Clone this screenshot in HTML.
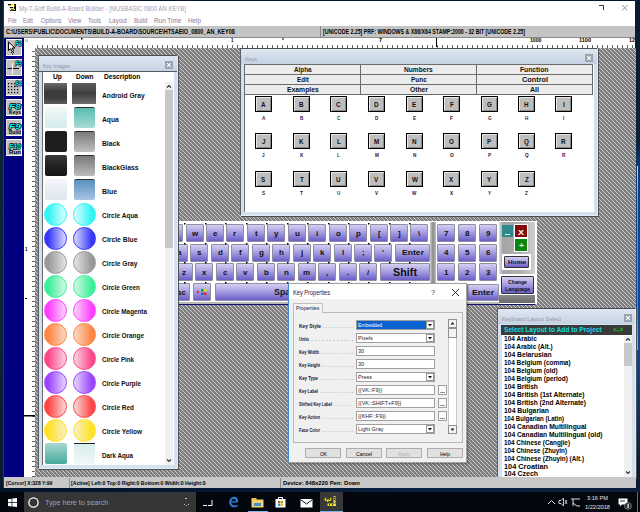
<!DOCTYPE html><html><head><meta charset="utf-8"><style>
*{margin:0;padding:0;box-sizing:border-box}
html,body{width:640px;height:512px;overflow:hidden;background:#041630;font-family:"Liberation Sans",sans-serif;position:relative}
.a{position:absolute}
.kw{position:absolute;background:#d3e0ef;border:1px solid #e4ecf6;border-top-color:#4a4f54;border-left-color:#5a5f64;box-shadow:1px 1px 0 #505050}
.ttl{position:absolute;background:linear-gradient(#dfe8f3,#c4d2e2)}
.cls{position:absolute;width:8px;height:8px;background:#9aa4ae}
.key{position:absolute;width:17px;height:16px;background:#bebebe;border:1px solid #000;box-shadow:inset 1px 1px 0 #e6e6e6, inset -1px -1px 0 #8a8a8a}
.tab{position:absolute;height:11px;background:#ececec;border:1px solid #6c6c6c}
.tbb{position:absolute;left:6px;width:16px;height:17px;background:#c0c0c0;border:1px solid #fff;border-left-color:#d8d8d8}
.img{position:absolute;width:23px;height:21px}
.cir{position:absolute;width:23px;height:23px;border-radius:50%}
.pk{position:absolute;background:linear-gradient(#d4cff2,#a9a1e2 45%,#6a5dc8);border:1px solid #8e8ea0;border-radius:1px}
</style></head><body>
<div class="a" style="left:0px;top:0px;width:4px;height:488px;background:linear-gradient(#08182c,#0c2838 30%,#0a2436 70%,#081a2c)"></div>
<div class="a" style="left:3px;top:0px;width:1px;height:488px;background:#2a3a48"></div>
<div class="a" style="left:635px;top:0px;width:5px;height:492px;background:linear-gradient(#0b1a2e,#0b2038 140px,#0a3a74 165px,#0b4a94 250px,#0b4a94 350px,#0a3466 410px,#0b1a2e 470px)"></div>
<div class="a" style="left:636.5px;top:166px;width:1.2px;height:184px;background:linear-gradient(#b0e0ff,#50a8e8 20%,#3890d8 80%,#70c0f0)"></div>
<div class="a" style="left:4px;top:1px;width:631px;height:487px;background:#fff"></div>
<svg class="a" style="left:8px;top:4px" width="9" height="8"><rect x="0" y="0" width="3.5" height="1.3" fill="#000"/><rect x="3" y="0" width="2" height="2" fill="#ff0"/><rect x="6" y="0" width="2" height="7" fill="#000"/><rect x="6" y="1.3" width="1" height="1" fill="#ff0"/><rect x="1.8" y="3" width="3.4" height="1.2" fill="#000"/><rect x="1.8" y="5.4" width="6.2" height="1.4" fill="#000"/><rect x="1.8" y="5" width="1.2" height="1" fill="#ff0"/><rect x="6" y="5" width="1" height="1" fill="#ff0"/></svg>
<svg class="a" style="left:19.00px;top:3.60px;overflow:visible" width="169.0" height="9.5"><text x="0" y="7.00" textLength="167.00" lengthAdjust="spacingAndGlyphs" font-family="Liberation Sans" font-size="7" font-weight="normal" fill="#a49cc0" fill-opacity="1">My-T-Soft Build-A-Board Builder - [MUSBASIC 0800 AN KEYB]</text></svg>
<svg class="a" style="left:598px;top:4px" width="8" height="7"><path d="M1 1.5H5.5V6" stroke="#333" fill="none" stroke-width="1"/></svg>
<svg class="a" style="left:621px;top:4px" width="8" height="8"><path d="M1 1L6.5 6.5M6.5 1L1 6.5" stroke="#888" stroke-width="0.9"/></svg>
<svg class="a" style="left:7.80px;top:15.80px;overflow:visible" width="10.6" height="9.5"><text x="0" y="7.00" textLength="8.60" lengthAdjust="spacingAndGlyphs" font-family="Liberation Sans" font-size="7" font-weight="normal" fill="#8878a0" fill-opacity="1">File</text></svg>
<svg class="a" style="left:23.40px;top:15.80px;overflow:visible" width="11.9" height="9.5"><text x="0" y="7.00" textLength="9.90" lengthAdjust="spacingAndGlyphs" font-family="Liberation Sans" font-size="7" font-weight="normal" fill="#8878a0" fill-opacity="1">Edit</text></svg>
<svg class="a" style="left:40.60px;top:15.80px;overflow:visible" width="22.4" height="9.5"><text x="0" y="7.00" textLength="20.40" lengthAdjust="spacingAndGlyphs" font-family="Liberation Sans" font-size="7" font-weight="normal" fill="#8878a0" fill-opacity="1">Options</text></svg>
<svg class="a" style="left:68.00px;top:15.80px;overflow:visible" width="15.2" height="9.5"><text x="0" y="7.00" textLength="13.20" lengthAdjust="spacingAndGlyphs" font-family="Liberation Sans" font-size="7" font-weight="normal" fill="#8878a0" fill-opacity="1">View</text></svg>
<svg class="a" style="left:88.30px;top:15.80px;overflow:visible" width="15.0" height="9.5"><text x="0" y="7.00" textLength="13.00" lengthAdjust="spacingAndGlyphs" font-family="Liberation Sans" font-size="7" font-weight="normal" fill="#8878a0" fill-opacity="1">Tools</text></svg>
<svg class="a" style="left:108.60px;top:15.80px;overflow:visible" width="20.0" height="9.5"><text x="0" y="7.00" textLength="18.00" lengthAdjust="spacingAndGlyphs" font-family="Liberation Sans" font-size="7" font-weight="normal" fill="#8878a0" fill-opacity="1">Layout</text></svg>
<svg class="a" style="left:133.60px;top:15.80px;overflow:visible" width="15.3" height="9.5"><text x="0" y="7.00" textLength="13.30" lengthAdjust="spacingAndGlyphs" font-family="Liberation Sans" font-size="7" font-weight="normal" fill="#8878a0" fill-opacity="1">Build</text></svg>
<svg class="a" style="left:153.90px;top:15.80px;overflow:visible" width="29.3" height="9.5"><text x="0" y="7.00" textLength="27.30" lengthAdjust="spacingAndGlyphs" font-family="Liberation Sans" font-size="7" font-weight="normal" fill="#8878a0" fill-opacity="1">Run Time</text></svg>
<svg class="a" style="left:187.50px;top:15.80px;overflow:visible" width="15.0" height="9.5"><text x="0" y="7.00" textLength="13.00" lengthAdjust="spacingAndGlyphs" font-family="Liberation Sans" font-size="7" font-weight="normal" fill="#8878a0" fill-opacity="1">Help</text></svg>
<div class="a" style="left:4px;top:26px;width:631px;height:11px;background:#c4c4c4"></div>
<div class="a" style="left:4px;top:37px;width:631px;height:1px;background:#7a7a7a"></div>
<div class="a" style="left:320px;top:26px;width:1px;height:11px;background:#8a8a8a"></div>
<svg class="a" style="left:5.60px;top:26.90px;overflow:visible" width="230.8" height="9.5"><text x="0" y="7.00" textLength="228.80" lengthAdjust="spacingAndGlyphs" font-family="Liberation Sans" font-size="7" font-weight="bold" fill="#000" fill-opacity="1">C:\USERS\PUBLIC\DOCUMENTS\BUILD-A-BOARD\SOURCE\HTSAEIO_0800_AN_KEY08</text></svg>
<svg class="a" style="left:322.50px;top:26.90px;overflow:visible" width="204.0" height="9.5"><text x="0" y="7.00" textLength="202.00" lengthAdjust="spacingAndGlyphs" font-family="Liberation Sans" font-size="7" font-weight="bold" fill="#000" fill-opacity="1">[UNICODE 2.25] PRF: WINDOWS &amp; X86/X64 STAMP:2000 - 32 BIT [UNICODE 2.25]</text></svg>
<div class="a" style="left:4px;top:38px;width:20px;height:438.5px;background:#000080"></div>
<div class="tbb" style="top:39px"></div>
<div class="tbb" style="top:59px"></div>
<div class="tbb" style="top:79px"></div>
<div class="tbb" style="top:99px"></div>
<div class="tbb" style="top:119px"></div>
<div class="tbb" style="top:139px"></div>
<svg class="a" style="left:6px;top:39px" width="16" height="17"><path d="M2.5 3V11.5L4.6 9.6L6.2 12.6L7.6 11.9L6.1 9H9Z" fill="#fff" stroke="#000" stroke-width="1"/><path d="M5 13.5h1M7 13.5h1M6 15h1" stroke="#000" stroke-width="1"/></svg>
<svg class="a" style="left:14.50px;top:39.30px;overflow:visible" width="9.0" height="8.8"><text x="0" y="6.50" textLength="7.00" lengthAdjust="spacingAndGlyphs" font-family="Liberation Sans" font-size="6.5" font-weight="bold" fill="#00f0ff" fill-opacity="1" stroke="#000" stroke-width="1" paint-order="stroke" stroke-linejoin="round" font-style="italic">F2</text></svg>
<svg class="a" style="left:6px;top:59px" width="16" height="17"><path d="M1.5 9.5H13" stroke="#000" stroke-width="1"/><path d="M6.5 4V15" stroke="#fff" stroke-width="1"/></svg>
<svg class="a" style="left:14.50px;top:59.30px;overflow:visible" width="9.0" height="8.8"><text x="0" y="6.50" textLength="7.00" lengthAdjust="spacingAndGlyphs" font-family="Liberation Sans" font-size="6.5" font-weight="bold" fill="#00f0ff" fill-opacity="1" stroke="#000" stroke-width="1" paint-order="stroke" stroke-linejoin="round" font-style="italic">F3</text></svg>
<svg class="a" style="left:6px;top:79px" width="16" height="17"><rect x="2" y="4" width="1.2" height="1.2" fill="#000"/><rect x="2" y="7" width="1.2" height="1.2" fill="#000"/><rect x="2" y="10" width="1.2" height="1.2" fill="#000"/><rect x="2" y="13" width="1.2" height="1.2" fill="#000"/><rect x="5" y="4" width="1.2" height="1.2" fill="#000"/><rect x="5" y="7" width="1.2" height="1.2" fill="#000"/><rect x="5" y="10" width="1.2" height="1.2" fill="#000"/><rect x="5" y="13" width="1.2" height="1.2" fill="#000"/><rect x="8" y="4" width="1.2" height="1.2" fill="#000"/><rect x="8" y="7" width="1.2" height="1.2" fill="#000"/><rect x="8" y="10" width="1.2" height="1.2" fill="#000"/><rect x="8" y="13" width="1.2" height="1.2" fill="#000"/><rect x="11" y="4" width="1.2" height="1.2" fill="#000"/><rect x="11" y="7" width="1.2" height="1.2" fill="#000"/><rect x="11" y="10" width="1.2" height="1.2" fill="#000"/><rect x="11" y="13" width="1.2" height="1.2" fill="#000"/></svg>
<svg class="a" style="left:14.50px;top:79.30px;overflow:visible" width="9.0" height="8.8"><text x="0" y="6.50" textLength="7.00" lengthAdjust="spacingAndGlyphs" font-family="Liberation Sans" font-size="6.5" font-weight="bold" fill="#00f0ff" fill-opacity="1" stroke="#000" stroke-width="1" paint-order="stroke" stroke-linejoin="round" font-style="italic">F4</text></svg>
<svg class="a" style="left:8.50px;top:101.00px;overflow:visible" width="14.0" height="10.8"><text x="0" y="8.00" textLength="12.00" lengthAdjust="spacingAndGlyphs" font-family="Liberation Sans" font-size="8" font-weight="bold" fill="#00f0ff" fill-opacity="1" stroke="#000" stroke-width="1.3" paint-order="stroke" stroke-linejoin="round" font-style="italic">F8</text></svg>
<svg class="a" style="left:8.50px;top:109.00px;overflow:visible" width="14.0" height="6.8"><text x="0" y="5.00" textLength="12.00" lengthAdjust="spacingAndGlyphs" font-family="Liberation Sans" font-size="5" font-weight="bold" fill="#000" fill-opacity="1">Keys</text></svg>
<svg class="a" style="left:8.50px;top:121.00px;overflow:visible" width="14.0" height="10.8"><text x="0" y="8.00" textLength="12.00" lengthAdjust="spacingAndGlyphs" font-family="Liberation Sans" font-size="8" font-weight="bold" fill="#00f0ff" fill-opacity="1" stroke="#000" stroke-width="1.3" paint-order="stroke" stroke-linejoin="round" font-style="italic">F9</text></svg>
<svg class="a" style="left:8.50px;top:129.00px;overflow:visible" width="14.0" height="6.8"><text x="0" y="5.00" textLength="12.00" lengthAdjust="spacingAndGlyphs" font-family="Liberation Sans" font-size="5" font-weight="bold" fill="#000" fill-opacity="1">Build</text></svg>
<svg class="a" style="left:8.50px;top:141.00px;overflow:visible" width="14.0" height="10.8"><text x="0" y="8.00" textLength="12.00" lengthAdjust="spacingAndGlyphs" font-family="Liberation Sans" font-size="8" font-weight="bold" fill="#00f0ff" fill-opacity="1" stroke="#000" stroke-width="1.3" paint-order="stroke" stroke-linejoin="round" font-style="italic">F10</text></svg>
<svg class="a" style="left:8.50px;top:149.00px;overflow:visible" width="14.0" height="6.8"><text x="0" y="5.00" textLength="12.00" lengthAdjust="spacingAndGlyphs" font-family="Liberation Sans" font-size="5" font-weight="bold" fill="#000" fill-opacity="1">Run</text></svg>
<div class="a" style="left:24px;top:37px;width:611px;height:1px;background:#8a8a8a"></div>
<svg class="a" style="left:0;top:0" width="640" height="512"><rect x="37" y="45" width="1" height="3" fill="#666"/><rect x="42" y="45" width="1" height="3" fill="#666"/><rect x="47" y="45" width="1" height="3" fill="#666"/><rect x="52" y="45" width="1" height="3" fill="#666"/><rect x="57" y="45" width="1" height="3" fill="#666"/><rect x="62" y="45" width="1" height="3" fill="#666"/><rect x="67" y="45" width="1" height="3" fill="#666"/><rect x="72" y="45" width="1" height="3" fill="#666"/><rect x="77" y="45" width="1" height="3" fill="#666"/><rect x="82" y="45" width="1" height="3" fill="#666"/><rect x="87" y="45" width="1" height="3" fill="#666"/><rect x="92" y="45" width="1" height="3" fill="#666"/><rect x="97" y="45" width="1" height="3" fill="#666"/><rect x="102" y="45" width="1" height="3" fill="#666"/><rect x="107" y="45" width="1" height="3" fill="#666"/><rect x="112" y="45" width="1" height="3" fill="#666"/><rect x="117" y="45" width="1" height="3" fill="#666"/><rect x="122" y="45" width="1" height="3" fill="#666"/><rect x="127" y="45" width="1" height="3" fill="#666"/><rect x="132" y="45" width="1" height="3" fill="#666"/><rect x="137" y="45" width="1" height="3" fill="#666"/><rect x="142" y="45" width="1" height="3" fill="#666"/><rect x="147" y="45" width="1" height="3" fill="#666"/><rect x="152" y="45" width="1" height="3" fill="#666"/><rect x="157" y="45" width="1" height="3" fill="#666"/><rect x="162" y="45" width="1" height="3" fill="#666"/><rect x="167" y="45" width="1" height="3" fill="#666"/><rect x="172" y="45" width="1" height="3" fill="#666"/><rect x="177" y="45" width="1" height="3" fill="#666"/><rect x="182" y="45" width="1" height="3" fill="#666"/><rect x="187" y="45" width="1" height="3" fill="#666"/><rect x="192" y="45" width="1" height="3" fill="#666"/><rect x="197" y="45" width="1" height="3" fill="#666"/><rect x="202" y="45" width="1" height="3" fill="#666"/><rect x="207" y="45" width="1" height="3" fill="#666"/><rect x="212" y="45" width="1" height="3" fill="#666"/><rect x="217" y="45" width="1" height="3" fill="#666"/><rect x="222" y="45" width="1" height="3" fill="#666"/><rect x="227" y="45" width="1" height="3" fill="#666"/><rect x="232" y="45" width="1" height="3" fill="#666"/><rect x="237" y="45" width="1" height="3" fill="#666"/><rect x="242" y="45" width="1" height="3" fill="#666"/><rect x="247" y="45" width="1" height="3" fill="#666"/><rect x="252" y="45" width="1" height="3" fill="#666"/><rect x="257" y="45" width="1" height="3" fill="#666"/><rect x="262" y="45" width="1" height="3" fill="#666"/><rect x="267" y="45" width="1" height="3" fill="#666"/><rect x="272" y="45" width="1" height="3" fill="#666"/><rect x="277" y="45" width="1" height="3" fill="#666"/><rect x="282" y="45" width="1" height="3" fill="#666"/><rect x="287" y="45" width="1" height="3" fill="#666"/><rect x="292" y="45" width="1" height="3" fill="#666"/><rect x="297" y="45" width="1" height="3" fill="#666"/><rect x="302" y="45" width="1" height="3" fill="#666"/><rect x="307" y="45" width="1" height="3" fill="#666"/><rect x="312" y="45" width="1" height="3" fill="#666"/><rect x="317" y="45" width="1" height="3" fill="#666"/><rect x="322" y="45" width="1" height="3" fill="#666"/><rect x="327" y="45" width="1" height="3" fill="#666"/><rect x="332" y="45" width="1" height="3" fill="#666"/><rect x="337" y="45" width="1" height="3" fill="#666"/><rect x="342" y="45" width="1" height="3" fill="#666"/><rect x="347" y="45" width="1" height="3" fill="#666"/><rect x="352" y="45" width="1" height="3" fill="#666"/><rect x="357" y="45" width="1" height="3" fill="#666"/><rect x="362" y="45" width="1" height="3" fill="#666"/><rect x="367" y="45" width="1" height="3" fill="#666"/><rect x="372" y="45" width="1" height="3" fill="#666"/><rect x="377" y="45" width="1" height="3" fill="#666"/><rect x="382" y="45" width="1" height="3" fill="#666"/><rect x="387" y="45" width="1" height="3" fill="#666"/><rect x="392" y="45" width="1" height="3" fill="#666"/><rect x="397" y="45" width="1" height="3" fill="#666"/><rect x="402" y="45" width="1" height="3" fill="#666"/><rect x="407" y="45" width="1" height="3" fill="#666"/><rect x="412" y="45" width="1" height="3" fill="#666"/><rect x="417" y="45" width="1" height="3" fill="#666"/><rect x="422" y="45" width="1" height="3" fill="#666"/><rect x="427" y="45" width="1" height="3" fill="#666"/><rect x="432" y="45" width="1" height="3" fill="#666"/><rect x="437" y="45" width="1" height="3" fill="#666"/><rect x="442" y="45" width="1" height="3" fill="#666"/><rect x="447" y="45" width="1" height="3" fill="#666"/><rect x="452" y="45" width="1" height="3" fill="#666"/><rect x="457" y="45" width="1" height="3" fill="#666"/><rect x="462" y="45" width="1" height="3" fill="#666"/><rect x="467" y="45" width="1" height="3" fill="#666"/><rect x="472" y="45" width="1" height="3" fill="#666"/><rect x="477" y="45" width="1" height="3" fill="#666"/><rect x="482" y="45" width="1" height="3" fill="#666"/><rect x="487" y="45" width="1" height="3" fill="#666"/><rect x="492" y="45" width="1" height="3" fill="#666"/><rect x="497" y="45" width="1" height="3" fill="#666"/><rect x="502" y="45" width="1" height="3" fill="#666"/><rect x="507" y="45" width="1" height="3" fill="#666"/><rect x="512" y="45" width="1" height="3" fill="#666"/><rect x="517" y="45" width="1" height="3" fill="#666"/><rect x="522" y="45" width="1" height="3" fill="#666"/><rect x="527" y="45" width="1" height="3" fill="#666"/><rect x="532" y="45" width="1" height="3" fill="#666"/><rect x="537" y="45" width="1" height="3" fill="#666"/><rect x="542" y="45" width="1" height="3" fill="#666"/><rect x="547" y="45" width="1" height="3" fill="#666"/><rect x="552" y="45" width="1" height="3" fill="#666"/><rect x="557" y="45" width="1" height="3" fill="#666"/><rect x="562" y="45" width="1" height="3" fill="#666"/><rect x="567" y="45" width="1" height="3" fill="#666"/><rect x="572" y="45" width="1" height="3" fill="#666"/><rect x="577" y="45" width="1" height="3" fill="#666"/><rect x="582" y="45" width="1" height="3" fill="#666"/><rect x="587" y="45" width="1" height="3" fill="#666"/><rect x="592" y="45" width="1" height="3" fill="#666"/><rect x="597" y="45" width="1" height="3" fill="#666"/><rect x="602" y="45" width="1" height="3" fill="#666"/><rect x="607" y="45" width="1" height="3" fill="#666"/><rect x="612" y="45" width="1" height="3" fill="#666"/><rect x="617" y="45" width="1" height="3" fill="#666"/><rect x="622" y="45" width="1" height="3" fill="#666"/><rect x="627" y="45" width="1" height="3" fill="#666"/><rect x="632" y="45" width="1" height="3" fill="#666"/><rect x="32" y="51" width="3" height="1" fill="#666"/><rect x="32" y="56" width="3" height="1" fill="#666"/><rect x="32" y="61" width="3" height="1" fill="#666"/><rect x="32" y="66" width="3" height="1" fill="#666"/><rect x="32" y="71" width="3" height="1" fill="#666"/><rect x="32" y="76" width="3" height="1" fill="#666"/><rect x="32" y="81" width="3" height="1" fill="#666"/><rect x="32" y="86" width="3" height="1" fill="#666"/><rect x="32" y="91" width="3" height="1" fill="#666"/><rect x="32" y="96" width="3" height="1" fill="#666"/><rect x="32" y="101" width="3" height="1" fill="#666"/><rect x="32" y="106" width="3" height="1" fill="#666"/><rect x="32" y="111" width="3" height="1" fill="#666"/><rect x="32" y="116" width="3" height="1" fill="#666"/><rect x="32" y="121" width="3" height="1" fill="#666"/><rect x="32" y="126" width="3" height="1" fill="#666"/><rect x="32" y="131" width="3" height="1" fill="#666"/><rect x="32" y="136" width="3" height="1" fill="#666"/><rect x="32" y="141" width="3" height="1" fill="#666"/><rect x="32" y="146" width="3" height="1" fill="#666"/><rect x="32" y="151" width="3" height="1" fill="#666"/><rect x="32" y="156" width="3" height="1" fill="#666"/><rect x="32" y="161" width="3" height="1" fill="#666"/><rect x="32" y="166" width="3" height="1" fill="#666"/><rect x="32" y="171" width="3" height="1" fill="#666"/><rect x="32" y="176" width="3" height="1" fill="#666"/><rect x="32" y="181" width="3" height="1" fill="#666"/><rect x="32" y="186" width="3" height="1" fill="#666"/><rect x="32" y="191" width="3" height="1" fill="#666"/><rect x="32" y="196" width="3" height="1" fill="#666"/><rect x="32" y="201" width="3" height="1" fill="#666"/><rect x="32" y="206" width="3" height="1" fill="#666"/><rect x="32" y="211" width="3" height="1" fill="#666"/><rect x="32" y="216" width="3" height="1" fill="#666"/><rect x="32" y="221" width="3" height="1" fill="#666"/><rect x="32" y="226" width="3" height="1" fill="#666"/><rect x="32" y="231" width="3" height="1" fill="#666"/><rect x="32" y="236" width="3" height="1" fill="#666"/><rect x="32" y="241" width="3" height="1" fill="#666"/><rect x="32" y="246" width="3" height="1" fill="#666"/><rect x="32" y="251" width="3" height="1" fill="#666"/><rect x="32" y="256" width="3" height="1" fill="#666"/><rect x="32" y="261" width="3" height="1" fill="#666"/><rect x="32" y="266" width="3" height="1" fill="#666"/><rect x="32" y="271" width="3" height="1" fill="#666"/><rect x="32" y="276" width="3" height="1" fill="#666"/><rect x="32" y="281" width="3" height="1" fill="#666"/><rect x="32" y="286" width="3" height="1" fill="#666"/><rect x="32" y="291" width="3" height="1" fill="#666"/><rect x="32" y="296" width="3" height="1" fill="#666"/><rect x="32" y="301" width="3" height="1" fill="#666"/><rect x="32" y="306" width="3" height="1" fill="#666"/><rect x="32" y="311" width="3" height="1" fill="#666"/><rect x="32" y="316" width="3" height="1" fill="#666"/><rect x="32" y="321" width="3" height="1" fill="#666"/><rect x="32" y="326" width="3" height="1" fill="#666"/><rect x="32" y="331" width="3" height="1" fill="#666"/><rect x="32" y="336" width="3" height="1" fill="#666"/><rect x="32" y="341" width="3" height="1" fill="#666"/><rect x="32" y="346" width="3" height="1" fill="#666"/><rect x="32" y="351" width="3" height="1" fill="#666"/><rect x="32" y="356" width="3" height="1" fill="#666"/><rect x="32" y="361" width="3" height="1" fill="#666"/><rect x="32" y="366" width="3" height="1" fill="#666"/><rect x="32" y="371" width="3" height="1" fill="#666"/><rect x="32" y="376" width="3" height="1" fill="#666"/><rect x="32" y="381" width="3" height="1" fill="#666"/><rect x="32" y="386" width="3" height="1" fill="#666"/><rect x="32" y="391" width="3" height="1" fill="#666"/><rect x="32" y="396" width="3" height="1" fill="#666"/><rect x="32" y="401" width="3" height="1" fill="#666"/><rect x="32" y="406" width="3" height="1" fill="#666"/><rect x="32" y="411" width="3" height="1" fill="#666"/><rect x="32" y="416" width="3" height="1" fill="#666"/><rect x="32" y="421" width="3" height="1" fill="#666"/><rect x="32" y="426" width="3" height="1" fill="#666"/><rect x="32" y="431" width="3" height="1" fill="#666"/><rect x="32" y="436" width="3" height="1" fill="#666"/><rect x="32" y="441" width="3" height="1" fill="#666"/><rect x="32" y="446" width="3" height="1" fill="#666"/><rect x="32" y="451" width="3" height="1" fill="#666"/><rect x="32" y="456" width="3" height="1" fill="#666"/><rect x="32" y="461" width="3" height="1" fill="#666"/><rect x="32" y="466" width="3" height="1" fill="#666"/><rect x="32" y="471" width="3" height="1" fill="#666"/><rect x="32" y="476" width="3" height="1" fill="#666"/><rect x="24" y="415" width="11" height="1.5" fill="#000"/><rect x="81" y="38" width="1.5" height="1.5" fill="#000"/><rect x="282" y="38.5" width="2" height="1" fill="#000"/><rect x="436" y="38" width="1" height="9" fill="#000"/></svg>
<svg class="a" style="left:25.00px;top:37.50px;overflow:visible" width="5.0" height="5.4"><text x="0" y="4.00" textLength="3.00" lengthAdjust="spacingAndGlyphs" font-family="Liberation Sans" font-size="4" font-weight="normal" fill="#555" fill-opacity="1">0</text></svg>
<svg class="a" style="left:231.00px;top:37.00px;overflow:visible" width="4.5" height="6.8"><text x="0" y="5.00" textLength="2.50" lengthAdjust="spacingAndGlyphs" font-family="Liberation Sans" font-size="5" font-weight="bold" fill="#000" fill-opacity="1">1</text></svg>
<svg class="a" style="left:379.00px;top:37.00px;overflow:visible" width="5.0" height="6.8"><text x="0" y="5.00" textLength="3.00" lengthAdjust="spacingAndGlyphs" font-family="Liberation Sans" font-size="5" font-weight="bold" fill="#000" fill-opacity="1">7</text></svg>
<svg class="a" style="left:529.50px;top:36.20px;overflow:visible" width="13.5" height="8.1"><text x="0" y="6.00" textLength="11.50" lengthAdjust="spacingAndGlyphs" font-family="Liberation Sans" font-size="6" font-weight="bold" fill="#000" fill-opacity="1">1000</text></svg>
<svg class="a" style="left:579.00px;top:36.20px;overflow:visible" width="14.0" height="8.1"><text x="0" y="6.00" textLength="12.00" lengthAdjust="spacingAndGlyphs" font-family="Liberation Sans" font-size="6" font-weight="bold" fill="#000" fill-opacity="1">1100</text></svg>
<svg class="a" style="left:629.00px;top:36.20px;overflow:visible" width="8.0" height="8.1"><text x="0" y="6.00" textLength="6.00" lengthAdjust="spacingAndGlyphs" font-family="Liberation Sans" font-size="6" font-weight="bold" fill="#000" fill-opacity="1">12</text></svg>
<svg class="a" style="left:25.00px;top:245.60px;overflow:visible" width="4.5" height="6.8"><text x="0" y="5.00" textLength="2.50" lengthAdjust="spacingAndGlyphs" font-family="Liberation Sans" font-size="5" font-weight="bold" fill="#000" fill-opacity="1">1</text></svg>
<div class="a" style="left:25px;top:298px;width:2px;height:1px;background:#000"></div>
<svg class="a" style="left:0;top:0" width="640" height="512"><defs><pattern id="h" width="4" height="4" patternUnits="userSpaceOnUse"><rect width="4" height="4" fill="#7f7f7f"/><rect x="0" y="0" width="1" height="1" fill="#cdcdcd"/><rect x="1" y="1" width="1" height="1" fill="#cdcdcd"/><rect x="2" y="2" width="1" height="1" fill="#cdcdcd"/><rect x="3" y="3" width="1" height="1" fill="#cdcdcd"/></pattern></defs><rect x="35" y="48" width="601" height="429" fill="url(#h)"/></svg>
<div class="a" style="left:160px;top:221px;width:377px;height:83px;background:#fff"></div>
<div class="pk" style="left:165px;top:224px;width:18px;height:18px"></div>
<svg class="a" style="left:171.56px;top:227.88px;overflow:visible" width="6.9" height="10.8"><text x="0" y="8.00" textLength="4.89" lengthAdjust="spacingAndGlyphs" font-family="Liberation Sans" font-size="8" font-weight="bold" fill="#111" fill-opacity="1">q</text></svg>
<div class="pk" style="left:186px;top:224px;width:18px;height:18px"></div>
<svg class="a" style="left:191.89px;top:227.88px;overflow:visible" width="8.2" height="10.8"><text x="0" y="8.00" textLength="6.22" lengthAdjust="spacingAndGlyphs" font-family="Liberation Sans" font-size="8" font-weight="bold" fill="#111" fill-opacity="1">w</text></svg>
<div class="pk" style="left:206px;top:224px;width:18px;height:18px"></div>
<svg class="a" style="left:212.78px;top:227.88px;overflow:visible" width="6.4" height="10.8"><text x="0" y="8.00" textLength="4.45" lengthAdjust="spacingAndGlyphs" font-family="Liberation Sans" font-size="8" font-weight="bold" fill="#111" fill-opacity="1">e</text></svg>
<div class="pk" style="left:226px;top:224px;width:18px;height:18px"></div>
<svg class="a" style="left:233.44px;top:227.88px;overflow:visible" width="5.1" height="10.8"><text x="0" y="8.00" textLength="3.11" lengthAdjust="spacingAndGlyphs" font-family="Liberation Sans" font-size="8" font-weight="bold" fill="#111" fill-opacity="1">r</text></svg>
<div class="pk" style="left:247px;top:224px;width:18px;height:18px"></div>
<svg class="a" style="left:254.67px;top:227.88px;overflow:visible" width="4.7" height="10.8"><text x="0" y="8.00" textLength="2.66" lengthAdjust="spacingAndGlyphs" font-family="Liberation Sans" font-size="8" font-weight="bold" fill="#111" fill-opacity="1">t</text></svg>
<div class="pk" style="left:267px;top:224px;width:18px;height:18px"></div>
<svg class="a" style="left:273.78px;top:227.88px;overflow:visible" width="6.4" height="10.8"><text x="0" y="8.00" textLength="4.45" lengthAdjust="spacingAndGlyphs" font-family="Liberation Sans" font-size="8" font-weight="bold" fill="#111" fill-opacity="1">y</text></svg>
<div class="pk" style="left:288px;top:224px;width:18px;height:18px"></div>
<svg class="a" style="left:294.56px;top:227.88px;overflow:visible" width="6.9" height="10.8"><text x="0" y="8.00" textLength="4.89" lengthAdjust="spacingAndGlyphs" font-family="Liberation Sans" font-size="8" font-weight="bold" fill="#111" fill-opacity="1">u</text></svg>
<div class="pk" style="left:308px;top:224px;width:18px;height:18px"></div>
<svg class="a" style="left:315.89px;top:227.88px;overflow:visible" width="4.2" height="10.8"><text x="0" y="8.00" textLength="2.22" lengthAdjust="spacingAndGlyphs" font-family="Liberation Sans" font-size="8" font-weight="bold" fill="#111" fill-opacity="1">i</text></svg>
<div class="pk" style="left:329px;top:224px;width:18px;height:18px"></div>
<svg class="a" style="left:335.56px;top:227.88px;overflow:visible" width="6.9" height="10.8"><text x="0" y="8.00" textLength="4.89" lengthAdjust="spacingAndGlyphs" font-family="Liberation Sans" font-size="8" font-weight="bold" fill="#111" fill-opacity="1">o</text></svg>
<div class="pk" style="left:349px;top:224px;width:18px;height:18px"></div>
<svg class="a" style="left:355.56px;top:227.88px;overflow:visible" width="6.9" height="10.8"><text x="0" y="8.00" textLength="4.89" lengthAdjust="spacingAndGlyphs" font-family="Liberation Sans" font-size="8" font-weight="bold" fill="#111" fill-opacity="1">p</text></svg>
<div class="pk" style="left:370px;top:224px;width:18px;height:18px"></div>
<svg class="a" style="left:377.67px;top:227.88px;overflow:visible" width="4.7" height="10.8"><text x="0" y="8.00" textLength="2.66" lengthAdjust="spacingAndGlyphs" font-family="Liberation Sans" font-size="8" font-weight="bold" fill="#111" fill-opacity="1">[</text></svg>
<div class="pk" style="left:390px;top:224px;width:18px;height:18px"></div>
<svg class="a" style="left:397.67px;top:227.88px;overflow:visible" width="4.7" height="10.8"><text x="0" y="8.00" textLength="2.66" lengthAdjust="spacingAndGlyphs" font-family="Liberation Sans" font-size="8" font-weight="bold" fill="#111" fill-opacity="1">]</text></svg>
<div class="pk" style="left:410px;top:224px;width:18px;height:18px"></div>
<svg class="a" style="left:417.89px;top:227.88px;overflow:visible" width="4.2" height="10.8"><text x="0" y="8.00" textLength="2.22" lengthAdjust="spacingAndGlyphs" font-family="Liberation Sans" font-size="8" font-weight="bold" fill="#111" fill-opacity="1">\</text></svg>
<div class="pk" style="left:170px;top:243.5px;width:18px;height:18px"></div>
<svg class="a" style="left:176.78px;top:247.38px;overflow:visible" width="6.4" height="10.8"><text x="0" y="8.00" textLength="4.45" lengthAdjust="spacingAndGlyphs" font-family="Liberation Sans" font-size="8" font-weight="bold" fill="#111" fill-opacity="1">a</text></svg>
<div class="pk" style="left:190px;top:243.5px;width:18px;height:18px"></div>
<svg class="a" style="left:196.78px;top:247.38px;overflow:visible" width="6.4" height="10.8"><text x="0" y="8.00" textLength="4.45" lengthAdjust="spacingAndGlyphs" font-family="Liberation Sans" font-size="8" font-weight="bold" fill="#111" fill-opacity="1">s</text></svg>
<div class="pk" style="left:211px;top:243.5px;width:18px;height:18px"></div>
<svg class="a" style="left:217.56px;top:247.38px;overflow:visible" width="6.9" height="10.8"><text x="0" y="8.00" textLength="4.89" lengthAdjust="spacingAndGlyphs" font-family="Liberation Sans" font-size="8" font-weight="bold" fill="#111" fill-opacity="1">d</text></svg>
<div class="pk" style="left:231px;top:243.5px;width:18px;height:18px"></div>
<svg class="a" style="left:238.67px;top:247.38px;overflow:visible" width="4.7" height="10.8"><text x="0" y="8.00" textLength="2.66" lengthAdjust="spacingAndGlyphs" font-family="Liberation Sans" font-size="8" font-weight="bold" fill="#111" fill-opacity="1">f</text></svg>
<div class="pk" style="left:252px;top:243.5px;width:18px;height:18px"></div>
<svg class="a" style="left:258.56px;top:247.38px;overflow:visible" width="6.9" height="10.8"><text x="0" y="8.00" textLength="4.89" lengthAdjust="spacingAndGlyphs" font-family="Liberation Sans" font-size="8" font-weight="bold" fill="#111" fill-opacity="1">g</text></svg>
<div class="pk" style="left:272px;top:243.5px;width:18px;height:18px"></div>
<svg class="a" style="left:278.56px;top:247.38px;overflow:visible" width="6.9" height="10.8"><text x="0" y="8.00" textLength="4.89" lengthAdjust="spacingAndGlyphs" font-family="Liberation Sans" font-size="8" font-weight="bold" fill="#111" fill-opacity="1">h</text></svg>
<div class="pk" style="left:293px;top:243.5px;width:18px;height:18px"></div>
<svg class="a" style="left:300.89px;top:247.38px;overflow:visible" width="4.2" height="10.8"><text x="0" y="8.00" textLength="2.22" lengthAdjust="spacingAndGlyphs" font-family="Liberation Sans" font-size="8" font-weight="bold" fill="#111" fill-opacity="1">j</text></svg>
<div class="pk" style="left:313px;top:243.5px;width:18px;height:18px"></div>
<svg class="a" style="left:319.78px;top:247.38px;overflow:visible" width="6.4" height="10.8"><text x="0" y="8.00" textLength="4.45" lengthAdjust="spacingAndGlyphs" font-family="Liberation Sans" font-size="8" font-weight="bold" fill="#111" fill-opacity="1">k</text></svg>
<div class="pk" style="left:334px;top:243.5px;width:18px;height:18px"></div>
<svg class="a" style="left:341.89px;top:247.38px;overflow:visible" width="4.2" height="10.8"><text x="0" y="8.00" textLength="2.22" lengthAdjust="spacingAndGlyphs" font-family="Liberation Sans" font-size="8" font-weight="bold" fill="#111" fill-opacity="1">l</text></svg>
<div class="pk" style="left:354px;top:243.5px;width:18px;height:18px"></div>
<svg class="a" style="left:361.67px;top:247.38px;overflow:visible" width="4.7" height="10.8"><text x="0" y="8.00" textLength="2.66" lengthAdjust="spacingAndGlyphs" font-family="Liberation Sans" font-size="8" font-weight="bold" fill="#111" fill-opacity="1">;</text></svg>
<div class="pk" style="left:374px;top:243.5px;width:18px;height:18px"></div>
<svg class="a" style="left:382.05px;top:247.38px;overflow:visible" width="3.9" height="10.8"><text x="0" y="8.00" textLength="1.90" lengthAdjust="spacingAndGlyphs" font-family="Liberation Sans" font-size="8" font-weight="bold" fill="#111" fill-opacity="1">&#x27;</text></svg>
<div class="pk" style="left:395px;top:243.5px;width:35px;height:18px"></div>
<svg class="a" style="left:401.50px;top:247.38px;overflow:visible" width="24.0" height="10.8"><text x="0" y="8.00" textLength="22.00" lengthAdjust="spacingAndGlyphs" font-family="Liberation Sans" font-size="8" font-weight="bold" fill="#111" fill-opacity="1">Enter</text></svg>
<div class="pk" style="left:175px;top:263px;width:18px;height:18px"></div>
<svg class="a" style="left:182.00px;top:266.88px;overflow:visible" width="6.0" height="10.8"><text x="0" y="8.00" textLength="4.00" lengthAdjust="spacingAndGlyphs" font-family="Liberation Sans" font-size="8" font-weight="bold" fill="#111" fill-opacity="1">z</text></svg>
<div class="pk" style="left:195px;top:263px;width:18px;height:18px"></div>
<svg class="a" style="left:201.78px;top:266.88px;overflow:visible" width="6.4" height="10.8"><text x="0" y="8.00" textLength="4.45" lengthAdjust="spacingAndGlyphs" font-family="Liberation Sans" font-size="8" font-weight="bold" fill="#111" fill-opacity="1">x</text></svg>
<div class="pk" style="left:216px;top:263px;width:18px;height:18px"></div>
<svg class="a" style="left:222.78px;top:266.88px;overflow:visible" width="6.4" height="10.8"><text x="0" y="8.00" textLength="4.45" lengthAdjust="spacingAndGlyphs" font-family="Liberation Sans" font-size="8" font-weight="bold" fill="#111" fill-opacity="1">c</text></svg>
<div class="pk" style="left:236px;top:263px;width:18px;height:18px"></div>
<svg class="a" style="left:242.78px;top:266.88px;overflow:visible" width="6.4" height="10.8"><text x="0" y="8.00" textLength="4.45" lengthAdjust="spacingAndGlyphs" font-family="Liberation Sans" font-size="8" font-weight="bold" fill="#111" fill-opacity="1">v</text></svg>
<div class="pk" style="left:257px;top:263px;width:18px;height:18px"></div>
<svg class="a" style="left:263.56px;top:266.88px;overflow:visible" width="6.9" height="10.8"><text x="0" y="8.00" textLength="4.89" lengthAdjust="spacingAndGlyphs" font-family="Liberation Sans" font-size="8" font-weight="bold" fill="#111" fill-opacity="1">b</text></svg>
<div class="pk" style="left:277px;top:263px;width:18px;height:18px"></div>
<svg class="a" style="left:283.56px;top:266.88px;overflow:visible" width="6.9" height="10.8"><text x="0" y="8.00" textLength="4.89" lengthAdjust="spacingAndGlyphs" font-family="Liberation Sans" font-size="8" font-weight="bold" fill="#111" fill-opacity="1">n</text></svg>
<div class="pk" style="left:298px;top:263px;width:18px;height:18px"></div>
<svg class="a" style="left:303.44px;top:266.88px;overflow:visible" width="9.1" height="10.8"><text x="0" y="8.00" textLength="7.11" lengthAdjust="spacingAndGlyphs" font-family="Liberation Sans" font-size="8" font-weight="bold" fill="#111" fill-opacity="1">m</text></svg>
<div class="pk" style="left:318px;top:263px;width:18px;height:18px"></div>
<svg class="a" style="left:325.89px;top:266.88px;overflow:visible" width="4.2" height="10.8"><text x="0" y="8.00" textLength="2.22" lengthAdjust="spacingAndGlyphs" font-family="Liberation Sans" font-size="8" font-weight="bold" fill="#111" fill-opacity="1">,</text></svg>
<div class="pk" style="left:339px;top:263px;width:18px;height:18px"></div>
<svg class="a" style="left:346.89px;top:266.88px;overflow:visible" width="4.2" height="10.8"><text x="0" y="8.00" textLength="2.22" lengthAdjust="spacingAndGlyphs" font-family="Liberation Sans" font-size="8" font-weight="bold" fill="#111" fill-opacity="1">.</text></svg>
<div class="pk" style="left:359px;top:263px;width:18px;height:18px"></div>
<svg class="a" style="left:366.89px;top:266.88px;overflow:visible" width="4.2" height="10.8"><text x="0" y="8.00" textLength="2.22" lengthAdjust="spacingAndGlyphs" font-family="Liberation Sans" font-size="8" font-weight="bold" fill="#111" fill-opacity="1">/</text></svg>
<div class="pk" style="left:380px;top:263px;width:50px;height:18px"></div>
<svg class="a" style="left:393.00px;top:265.60px;overflow:visible" width="26.0" height="13.5"><text x="0" y="10.00" textLength="24.00" lengthAdjust="spacingAndGlyphs" font-family="Liberation Sans" font-size="10" font-weight="bold" fill="#111" fill-opacity="1">Shift</text></svg>
<div class="pk" style="left:168px;top:283px;width:22px;height:18px"></div>
<svg class="a" style="left:172.00px;top:286.88px;overflow:visible" width="16.0" height="10.8"><text x="0" y="8.00" textLength="14.00" lengthAdjust="spacingAndGlyphs" font-family="Liberation Sans" font-size="8" font-weight="bold" fill="#111" fill-opacity="1">Esc</text></svg>
<div class="pk" style="left:193px;top:283px;width:18px;height:18px"></div>
<svg class="a" style="left:196px;top:288px" width="12" height="8"><circle cx="2" cy="4" r="1.2" fill="#e03030"/><rect x="5" y="1" width="2.5" height="2.5" fill="#20a020"/><rect x="8" y="1" width="2.5" height="2.5" fill="#e0e020"/><rect x="5" y="4.5" width="2.5" height="2.5" fill="#2060e0"/><rect x="8" y="4.5" width="2.5" height="2.5" fill="#e02020"/></svg>
<div class="pk" style="left:215px;top:283px;width:160px;height:18px"></div>
<svg class="a" style="left:273.75px;top:286.30px;overflow:visible" width="28.0" height="12.2"><text x="0" y="9.00" textLength="26.00" lengthAdjust="spacingAndGlyphs" font-family="Liberation Sans" font-size="9" font-weight="bold" fill="#111" fill-opacity="1">Space</text></svg>
<svg class="a" style="left:0;top:0" width="640" height="512"><rect x="164" y="223" width="1.5" height="1.5" fill="#000"/><rect x="164" y="243" width="1.5" height="1.5" fill="#000"/><rect x="164" y="262" width="1.5" height="1.5" fill="#000"/><rect x="164" y="282" width="1.5" height="1.5" fill="#000"/><rect x="184" y="223" width="1.5" height="1.5" fill="#000"/><rect x="184" y="243" width="1.5" height="1.5" fill="#000"/><rect x="184" y="262" width="1.5" height="1.5" fill="#000"/><rect x="184" y="282" width="1.5" height="1.5" fill="#000"/><rect x="205" y="223" width="1.5" height="1.5" fill="#000"/><rect x="205" y="243" width="1.5" height="1.5" fill="#000"/><rect x="205" y="262" width="1.5" height="1.5" fill="#000"/><rect x="205" y="282" width="1.5" height="1.5" fill="#000"/><rect x="225" y="223" width="1.5" height="1.5" fill="#000"/><rect x="225" y="243" width="1.5" height="1.5" fill="#000"/><rect x="225" y="262" width="1.5" height="1.5" fill="#000"/><rect x="225" y="282" width="1.5" height="1.5" fill="#000"/><rect x="246" y="223" width="1.5" height="1.5" fill="#000"/><rect x="246" y="243" width="1.5" height="1.5" fill="#000"/><rect x="246" y="262" width="1.5" height="1.5" fill="#000"/><rect x="246" y="282" width="1.5" height="1.5" fill="#000"/><rect x="266" y="223" width="1.5" height="1.5" fill="#000"/><rect x="266" y="243" width="1.5" height="1.5" fill="#000"/><rect x="266" y="262" width="1.5" height="1.5" fill="#000"/><rect x="266" y="282" width="1.5" height="1.5" fill="#000"/><rect x="287" y="223" width="1.5" height="1.5" fill="#000"/><rect x="287" y="243" width="1.5" height="1.5" fill="#000"/><rect x="287" y="262" width="1.5" height="1.5" fill="#000"/><rect x="287" y="282" width="1.5" height="1.5" fill="#000"/><rect x="307" y="223" width="1.5" height="1.5" fill="#000"/><rect x="307" y="243" width="1.5" height="1.5" fill="#000"/><rect x="307" y="262" width="1.5" height="1.5" fill="#000"/><rect x="307" y="282" width="1.5" height="1.5" fill="#000"/><rect x="328" y="223" width="1.5" height="1.5" fill="#000"/><rect x="328" y="243" width="1.5" height="1.5" fill="#000"/><rect x="328" y="262" width="1.5" height="1.5" fill="#000"/><rect x="328" y="282" width="1.5" height="1.5" fill="#000"/><rect x="348" y="223" width="1.5" height="1.5" fill="#000"/><rect x="348" y="243" width="1.5" height="1.5" fill="#000"/><rect x="348" y="262" width="1.5" height="1.5" fill="#000"/><rect x="348" y="282" width="1.5" height="1.5" fill="#000"/><rect x="368" y="223" width="1.5" height="1.5" fill="#000"/><rect x="368" y="243" width="1.5" height="1.5" fill="#000"/><rect x="368" y="262" width="1.5" height="1.5" fill="#000"/><rect x="368" y="282" width="1.5" height="1.5" fill="#000"/><rect x="389" y="223" width="1.5" height="1.5" fill="#000"/><rect x="389" y="243" width="1.5" height="1.5" fill="#000"/><rect x="389" y="262" width="1.5" height="1.5" fill="#000"/><rect x="389" y="282" width="1.5" height="1.5" fill="#000"/><rect x="409" y="223" width="1.5" height="1.5" fill="#000"/><rect x="409" y="243" width="1.5" height="1.5" fill="#000"/><rect x="409" y="262" width="1.5" height="1.5" fill="#000"/><rect x="409" y="282" width="1.5" height="1.5" fill="#000"/><rect x="430" y="223" width="1.5" height="1.5" fill="#000"/><rect x="430" y="243" width="1.5" height="1.5" fill="#000"/><rect x="430" y="262" width="1.5" height="1.5" fill="#000"/><rect x="430" y="282" width="1.5" height="1.5" fill="#000"/></svg>
<div class="a" style="left:430px;top:222px;width:6px;height:81px;background:linear-gradient(90deg,#d0d0d0,#8a8a8a 50%,#bcbcbc)"></div>
<div class="pk" style="left:437px;top:224px;width:18px;height:18px"></div>
<svg class="a" style="left:443.78px;top:227.88px;overflow:visible" width="6.4" height="10.8"><text x="0" y="8.00" textLength="4.45" lengthAdjust="spacingAndGlyphs" font-family="Liberation Sans" font-size="8" font-weight="bold" fill="#111" fill-opacity="1">7</text></svg>
<div class="pk" style="left:458px;top:224px;width:18px;height:18px"></div>
<svg class="a" style="left:464.78px;top:227.88px;overflow:visible" width="6.4" height="10.8"><text x="0" y="8.00" textLength="4.45" lengthAdjust="spacingAndGlyphs" font-family="Liberation Sans" font-size="8" font-weight="bold" fill="#111" fill-opacity="1">8</text></svg>
<div class="pk" style="left:479px;top:224px;width:18px;height:18px"></div>
<svg class="a" style="left:485.78px;top:227.88px;overflow:visible" width="6.4" height="10.8"><text x="0" y="8.00" textLength="4.45" lengthAdjust="spacingAndGlyphs" font-family="Liberation Sans" font-size="8" font-weight="bold" fill="#111" fill-opacity="1">9</text></svg>
<div class="pk" style="left:437px;top:243.5px;width:18px;height:18px"></div>
<svg class="a" style="left:443.78px;top:247.38px;overflow:visible" width="6.4" height="10.8"><text x="0" y="8.00" textLength="4.45" lengthAdjust="spacingAndGlyphs" font-family="Liberation Sans" font-size="8" font-weight="bold" fill="#111" fill-opacity="1">4</text></svg>
<div class="pk" style="left:458px;top:243.5px;width:18px;height:18px"></div>
<svg class="a" style="left:464.78px;top:247.38px;overflow:visible" width="6.4" height="10.8"><text x="0" y="8.00" textLength="4.45" lengthAdjust="spacingAndGlyphs" font-family="Liberation Sans" font-size="8" font-weight="bold" fill="#111" fill-opacity="1">5</text></svg>
<div class="pk" style="left:479px;top:243.5px;width:18px;height:18px"></div>
<svg class="a" style="left:485.78px;top:247.38px;overflow:visible" width="6.4" height="10.8"><text x="0" y="8.00" textLength="4.45" lengthAdjust="spacingAndGlyphs" font-family="Liberation Sans" font-size="8" font-weight="bold" fill="#111" fill-opacity="1">6</text></svg>
<div class="pk" style="left:437px;top:263px;width:18px;height:18px"></div>
<svg class="a" style="left:443.78px;top:266.88px;overflow:visible" width="6.4" height="10.8"><text x="0" y="8.00" textLength="4.45" lengthAdjust="spacingAndGlyphs" font-family="Liberation Sans" font-size="8" font-weight="bold" fill="#111" fill-opacity="1">1</text></svg>
<div class="pk" style="left:458px;top:263px;width:18px;height:18px"></div>
<svg class="a" style="left:464.78px;top:266.88px;overflow:visible" width="6.4" height="10.8"><text x="0" y="8.00" textLength="4.45" lengthAdjust="spacingAndGlyphs" font-family="Liberation Sans" font-size="8" font-weight="bold" fill="#111" fill-opacity="1">2</text></svg>
<div class="pk" style="left:479px;top:263px;width:18px;height:18px"></div>
<svg class="a" style="left:485.78px;top:266.88px;overflow:visible" width="6.4" height="10.8"><text x="0" y="8.00" textLength="4.45" lengthAdjust="spacingAndGlyphs" font-family="Liberation Sans" font-size="8" font-weight="bold" fill="#111" fill-opacity="1">3</text></svg>
<div class="pk" style="left:467px;top:284px;width:32px;height:17px"></div>
<svg class="a" style="left:472.00px;top:287.38px;overflow:visible" width="24.0" height="10.8"><text x="0" y="8.00" textLength="22.00" lengthAdjust="spacingAndGlyphs" font-family="Liberation Sans" font-size="8" font-weight="bold" fill="#111" fill-opacity="1">Enter</text></svg>
<div class="a" style="left:499px;top:222px;width:36px;height:81px;background:linear-gradient(90deg,#e0e0e0,#a4a4a4 4px,#b0b0b0 60%,#cfcfcf)"></div>
<div class="a" style="left:499px;top:295px;width:36px;height:8px;background:linear-gradient(#8a8a8a,#6a6a6a)"></div>
<div class="a" style="left:502px;top:225px;width:11px;height:12px;background:#2e8a8a"></div>
<div class="a" style="left:505px;top:234px;width:5px;height:1px;background:#fff"></div>
<div class="a" style="left:514px;top:224px;width:14px;height:14px;background:#fff"></div>
<div class="a" style="left:515px;top:225px;width:12px;height:12px;background:#860c0c"></div>
<svg class="a" style="left:518.00px;top:226.50px;overflow:visible" width="8.0" height="10.8"><text x="0" y="8.00" textLength="6.00" lengthAdjust="spacingAndGlyphs" font-family="Liberation Sans" font-size="8" font-weight="bold" fill="#fff" fill-opacity="1">X</text></svg>
<div class="a" style="left:514px;top:238px;width:14px;height:14px;background:#fff"></div>
<div class="a" style="left:515px;top:239px;width:12px;height:12px;background:#0a860a"></div>
<svg class="a" style="left:518.50px;top:241.00px;overflow:visible" width="7.0" height="9.5"><text x="0" y="7.00" textLength="5.00" lengthAdjust="spacingAndGlyphs" font-family="Liberation Sans" font-size="7" font-weight="bold" fill="#fff" fill-opacity="1">+</text></svg>
<div class="a" style="left:502px;top:254px;width:29px;height:16px;background:#fff"></div>
<div class="pk" style="left:504px;top:256px;width:25px;height:12px;border-color:#333"></div>
<svg class="a" style="left:507.50px;top:258.30px;overflow:visible" width="20.0" height="8.1"><text x="0" y="6.00" textLength="18.00" lengthAdjust="spacingAndGlyphs" font-family="Liberation Sans" font-size="6" font-weight="bold" fill="#111" fill-opacity="1">Home</text></svg>
<div class="a" style="left:499px;top:274px;width:36px;height:21px;background:#fff"></div>
<div class="pk" style="left:501px;top:276px;width:33px;height:18px;border-color:#333"></div>
<svg class="a" style="left:508.00px;top:277.50px;overflow:visible" width="21.0" height="8.1"><text x="0" y="6.00" textLength="19.00" lengthAdjust="spacingAndGlyphs" font-family="Liberation Sans" font-size="6" font-weight="bold" fill="#111" fill-opacity="1">Change</text></svg>
<svg class="a" style="left:505.00px;top:284.50px;overflow:visible" width="27.0" height="8.1"><text x="0" y="6.00" textLength="25.00" lengthAdjust="spacingAndGlyphs" font-family="Liberation Sans" font-size="6" font-weight="bold" fill="#111" fill-opacity="1">Language</text></svg>
<div class="a" style="left:160px;top:301.5px;width:340px;height:2px;background:#b8b8b8"></div>
<div class="a" style="left:160px;top:303.5px;width:375px;height:1.5px;background:#101070"></div>
<div class="kw" style="left:240px;top:48px;width:358px;height:168px"></div>
<div class="ttl" style="left:241px;top:49px;width:356px;height:15px"></div>
<svg class="a" style="left:245.00px;top:54.50px;overflow:visible" width="14.0" height="8.1"><text x="0" y="6.00" textLength="12.00" lengthAdjust="spacingAndGlyphs" font-family="Liberation Sans" font-size="6" font-weight="normal" fill="#9894a8" fill-opacity="1">Keys</text></svg>
<div class="cls" style="left:585px;top:54px"></div>
<svg class="a" style="left:585px;top:54px" width="8" height="8"><path d="M2.2 2.2L5.8 5.8M5.8 2.2L2.2 5.8" stroke="#fff" stroke-width="1.1"/></svg>
<div class="a" style="left:244px;top:64px;width:350px;height:147.5px;background:#fff;border-left:1px solid #6c6c6c"></div>
<div class="tab" style="left:244px;top:64px;width:117px"></div>
<svg class="a" style="left:293.75px;top:64.60px;overflow:visible" width="19.5" height="9.5"><text x="0" y="7.00" textLength="17.50" lengthAdjust="spacingAndGlyphs" font-family="Liberation Sans" font-size="7" font-weight="bold" fill="#111" fill-opacity="1">Alpha</text></svg>
<div class="tab" style="left:360px;top:64px;width:117px"></div>
<svg class="a" style="left:404.12px;top:64.60px;overflow:visible" width="30.8" height="9.5"><text x="0" y="7.00" textLength="28.75" lengthAdjust="spacingAndGlyphs" font-family="Liberation Sans" font-size="7" font-weight="bold" fill="#111" fill-opacity="1">Numbers</text></svg>
<div class="tab" style="left:476px;top:64px;width:117px"></div>
<svg class="a" style="left:520.25px;top:64.60px;overflow:visible" width="30.5" height="9.5"><text x="0" y="7.00" textLength="28.50" lengthAdjust="spacingAndGlyphs" font-family="Liberation Sans" font-size="7" font-weight="bold" fill="#111" fill-opacity="1">Function</text></svg>
<div class="tab" style="left:244px;top:74px;width:117px"></div>
<svg class="a" style="left:296.62px;top:74.60px;overflow:visible" width="13.8" height="9.5"><text x="0" y="7.00" textLength="11.75" lengthAdjust="spacingAndGlyphs" font-family="Liberation Sans" font-size="7" font-weight="bold" fill="#111" fill-opacity="1">Edit</text></svg>
<div class="tab" style="left:360px;top:74px;width:117px"></div>
<svg class="a" style="left:410.62px;top:74.60px;overflow:visible" width="17.8" height="9.5"><text x="0" y="7.00" textLength="15.75" lengthAdjust="spacingAndGlyphs" font-family="Liberation Sans" font-size="7" font-weight="bold" fill="#111" fill-opacity="1">Punc</text></svg>
<div class="tab" style="left:476px;top:74px;width:117px"></div>
<svg class="a" style="left:521.50px;top:74.60px;overflow:visible" width="28.0" height="9.5"><text x="0" y="7.00" textLength="26.00" lengthAdjust="spacingAndGlyphs" font-family="Liberation Sans" font-size="7" font-weight="bold" fill="#111" fill-opacity="1">Control</text></svg>
<div class="tab" style="left:244px;top:84px;width:117px"></div>
<svg class="a" style="left:286.62px;top:84.60px;overflow:visible" width="33.8" height="9.5"><text x="0" y="7.00" textLength="31.75" lengthAdjust="spacingAndGlyphs" font-family="Liberation Sans" font-size="7" font-weight="bold" fill="#111" fill-opacity="1">Examples</text></svg>
<div class="tab" style="left:360px;top:84px;width:117px"></div>
<svg class="a" style="left:409.50px;top:84.60px;overflow:visible" width="20.0" height="9.5"><text x="0" y="7.00" textLength="18.00" lengthAdjust="spacingAndGlyphs" font-family="Liberation Sans" font-size="7" font-weight="bold" fill="#111" fill-opacity="1">Other</text></svg>
<div class="tab" style="left:476px;top:84px;width:117px"></div>
<svg class="a" style="left:530.00px;top:84.60px;overflow:visible" width="11.0" height="9.5"><text x="0" y="7.00" textLength="9.00" lengthAdjust="spacingAndGlyphs" font-family="Liberation Sans" font-size="7" font-weight="bold" fill="#111" fill-opacity="1">All</text></svg>
<div class="key" style="left:255px;top:96px"></div>
<svg class="a" style="left:261.23px;top:99.50px;overflow:visible" width="6.5" height="9.5"><text x="0" y="7.00" textLength="4.55" lengthAdjust="spacingAndGlyphs" font-family="Liberation Sans" font-size="7" font-weight="bold" fill="#111" fill-opacity="1">A</text></svg>
<svg class="a" style="left:261.81px;top:113.80px;overflow:visible" width="5.4" height="7.4"><text x="0" y="5.50" textLength="3.38" lengthAdjust="spacingAndGlyphs" font-family="Liberation Sans" font-size="5.5" font-weight="bold" fill="#302050" fill-opacity="1">A</text></svg>
<div class="key" style="left:293px;top:96px"></div>
<svg class="a" style="left:299.23px;top:99.50px;overflow:visible" width="6.5" height="9.5"><text x="0" y="7.00" textLength="4.55" lengthAdjust="spacingAndGlyphs" font-family="Liberation Sans" font-size="7" font-weight="bold" fill="#111" fill-opacity="1">B</text></svg>
<svg class="a" style="left:299.81px;top:113.80px;overflow:visible" width="5.4" height="7.4"><text x="0" y="5.50" textLength="3.38" lengthAdjust="spacingAndGlyphs" font-family="Liberation Sans" font-size="5.5" font-weight="bold" fill="#102060" fill-opacity="1">B</text></svg>
<div class="key" style="left:330px;top:96px"></div>
<svg class="a" style="left:336.23px;top:99.50px;overflow:visible" width="6.5" height="9.5"><text x="0" y="7.00" textLength="4.55" lengthAdjust="spacingAndGlyphs" font-family="Liberation Sans" font-size="7" font-weight="bold" fill="#111" fill-opacity="1">C</text></svg>
<svg class="a" style="left:336.81px;top:113.80px;overflow:visible" width="5.4" height="7.4"><text x="0" y="5.50" textLength="3.38" lengthAdjust="spacingAndGlyphs" font-family="Liberation Sans" font-size="5.5" font-weight="bold" fill="#203050" fill-opacity="1">C</text></svg>
<div class="key" style="left:368px;top:96px"></div>
<svg class="a" style="left:374.23px;top:99.50px;overflow:visible" width="6.5" height="9.5"><text x="0" y="7.00" textLength="4.55" lengthAdjust="spacingAndGlyphs" font-family="Liberation Sans" font-size="7" font-weight="bold" fill="#111" fill-opacity="1">D</text></svg>
<svg class="a" style="left:374.81px;top:113.80px;overflow:visible" width="5.4" height="7.4"><text x="0" y="5.50" textLength="3.38" lengthAdjust="spacingAndGlyphs" font-family="Liberation Sans" font-size="5.5" font-weight="bold" fill="#500030" fill-opacity="1">D</text></svg>
<div class="key" style="left:406px;top:96px"></div>
<svg class="a" style="left:412.40px;top:99.50px;overflow:visible" width="6.2" height="9.5"><text x="0" y="7.00" textLength="4.20" lengthAdjust="spacingAndGlyphs" font-family="Liberation Sans" font-size="7" font-weight="bold" fill="#111" fill-opacity="1">E</text></svg>
<svg class="a" style="left:412.94px;top:113.80px;overflow:visible" width="5.1" height="7.4"><text x="0" y="5.50" textLength="3.12" lengthAdjust="spacingAndGlyphs" font-family="Liberation Sans" font-size="5.5" font-weight="bold" fill="#301050" fill-opacity="1">E</text></svg>
<div class="key" style="left:443px;top:96px"></div>
<svg class="a" style="left:449.58px;top:99.50px;overflow:visible" width="5.8" height="9.5"><text x="0" y="7.00" textLength="3.85" lengthAdjust="spacingAndGlyphs" font-family="Liberation Sans" font-size="7" font-weight="bold" fill="#111" fill-opacity="1">F</text></svg>
<svg class="a" style="left:450.07px;top:113.80px;overflow:visible" width="4.9" height="7.4"><text x="0" y="5.50" textLength="2.86" lengthAdjust="spacingAndGlyphs" font-family="Liberation Sans" font-size="5.5" font-weight="bold" fill="#101010" fill-opacity="1">F</text></svg>
<div class="key" style="left:481px;top:96px"></div>
<svg class="a" style="left:487.05px;top:99.50px;overflow:visible" width="6.9" height="9.5"><text x="0" y="7.00" textLength="4.90" lengthAdjust="spacingAndGlyphs" font-family="Liberation Sans" font-size="7" font-weight="bold" fill="#111" fill-opacity="1">G</text></svg>
<svg class="a" style="left:487.68px;top:113.80px;overflow:visible" width="5.6" height="7.4"><text x="0" y="5.50" textLength="3.64" lengthAdjust="spacingAndGlyphs" font-family="Liberation Sans" font-size="5.5" font-weight="bold" fill="#303030" fill-opacity="1">G</text></svg>
<div class="key" style="left:518px;top:96px"></div>
<svg class="a" style="left:524.23px;top:99.50px;overflow:visible" width="6.5" height="9.5"><text x="0" y="7.00" textLength="4.55" lengthAdjust="spacingAndGlyphs" font-family="Liberation Sans" font-size="7" font-weight="bold" fill="#111" fill-opacity="1">H</text></svg>
<svg class="a" style="left:524.81px;top:113.80px;overflow:visible" width="5.4" height="7.4"><text x="0" y="5.50" textLength="3.38" lengthAdjust="spacingAndGlyphs" font-family="Liberation Sans" font-size="5.5" font-weight="bold" fill="#500040" fill-opacity="1">H</text></svg>
<div class="key" style="left:555px;top:96px"></div>
<svg class="a" style="left:562.62px;top:99.50px;overflow:visible" width="3.8" height="9.5"><text x="0" y="7.00" textLength="1.75" lengthAdjust="spacingAndGlyphs" font-family="Liberation Sans" font-size="7" font-weight="bold" fill="#111" fill-opacity="1">I</text></svg>
<svg class="a" style="left:562.85px;top:113.80px;overflow:visible" width="3.3" height="7.4"><text x="0" y="5.50" textLength="1.30" lengthAdjust="spacingAndGlyphs" font-family="Liberation Sans" font-size="5.5" font-weight="bold" fill="#500060" fill-opacity="1">I</text></svg>
<div class="key" style="left:255px;top:133px"></div>
<svg class="a" style="left:261.75px;top:136.50px;overflow:visible" width="5.5" height="9.5"><text x="0" y="7.00" textLength="3.50" lengthAdjust="spacingAndGlyphs" font-family="Liberation Sans" font-size="7" font-weight="bold" fill="#111" fill-opacity="1">J</text></svg>
<svg class="a" style="left:262.20px;top:150.80px;overflow:visible" width="4.6" height="7.4"><text x="0" y="5.50" textLength="2.60" lengthAdjust="spacingAndGlyphs" font-family="Liberation Sans" font-size="5.5" font-weight="bold" fill="#302050" fill-opacity="1">J</text></svg>
<div class="key" style="left:293px;top:133px"></div>
<svg class="a" style="left:299.23px;top:136.50px;overflow:visible" width="6.5" height="9.5"><text x="0" y="7.00" textLength="4.55" lengthAdjust="spacingAndGlyphs" font-family="Liberation Sans" font-size="7" font-weight="bold" fill="#111" fill-opacity="1">K</text></svg>
<svg class="a" style="left:299.81px;top:150.80px;overflow:visible" width="5.4" height="7.4"><text x="0" y="5.50" textLength="3.38" lengthAdjust="spacingAndGlyphs" font-family="Liberation Sans" font-size="5.5" font-weight="bold" fill="#102060" fill-opacity="1">K</text></svg>
<div class="key" style="left:330px;top:133px"></div>
<svg class="a" style="left:336.58px;top:136.50px;overflow:visible" width="5.8" height="9.5"><text x="0" y="7.00" textLength="3.85" lengthAdjust="spacingAndGlyphs" font-family="Liberation Sans" font-size="7" font-weight="bold" fill="#111" fill-opacity="1">L</text></svg>
<svg class="a" style="left:337.07px;top:150.80px;overflow:visible" width="4.9" height="7.4"><text x="0" y="5.50" textLength="2.86" lengthAdjust="spacingAndGlyphs" font-family="Liberation Sans" font-size="5.5" font-weight="bold" fill="#203050" fill-opacity="1">L</text></svg>
<div class="key" style="left:368px;top:133px"></div>
<svg class="a" style="left:373.88px;top:136.50px;overflow:visible" width="7.2" height="9.5"><text x="0" y="7.00" textLength="5.25" lengthAdjust="spacingAndGlyphs" font-family="Liberation Sans" font-size="7" font-weight="bold" fill="#111" fill-opacity="1">M</text></svg>
<svg class="a" style="left:374.55px;top:150.80px;overflow:visible" width="5.9" height="7.4"><text x="0" y="5.50" textLength="3.89" lengthAdjust="spacingAndGlyphs" font-family="Liberation Sans" font-size="5.5" font-weight="bold" fill="#500030" fill-opacity="1">M</text></svg>
<div class="key" style="left:406px;top:133px"></div>
<svg class="a" style="left:412.23px;top:136.50px;overflow:visible" width="6.5" height="9.5"><text x="0" y="7.00" textLength="4.55" lengthAdjust="spacingAndGlyphs" font-family="Liberation Sans" font-size="7" font-weight="bold" fill="#111" fill-opacity="1">N</text></svg>
<svg class="a" style="left:412.81px;top:150.80px;overflow:visible" width="5.4" height="7.4"><text x="0" y="5.50" textLength="3.38" lengthAdjust="spacingAndGlyphs" font-family="Liberation Sans" font-size="5.5" font-weight="bold" fill="#301050" fill-opacity="1">N</text></svg>
<div class="key" style="left:443px;top:133px"></div>
<svg class="a" style="left:449.05px;top:136.50px;overflow:visible" width="6.9" height="9.5"><text x="0" y="7.00" textLength="4.90" lengthAdjust="spacingAndGlyphs" font-family="Liberation Sans" font-size="7" font-weight="bold" fill="#111" fill-opacity="1">O</text></svg>
<svg class="a" style="left:449.68px;top:150.80px;overflow:visible" width="5.6" height="7.4"><text x="0" y="5.50" textLength="3.64" lengthAdjust="spacingAndGlyphs" font-family="Liberation Sans" font-size="5.5" font-weight="bold" fill="#101010" fill-opacity="1">O</text></svg>
<div class="key" style="left:481px;top:133px"></div>
<svg class="a" style="left:487.40px;top:136.50px;overflow:visible" width="6.2" height="9.5"><text x="0" y="7.00" textLength="4.20" lengthAdjust="spacingAndGlyphs" font-family="Liberation Sans" font-size="7" font-weight="bold" fill="#111" fill-opacity="1">P</text></svg>
<svg class="a" style="left:487.94px;top:150.80px;overflow:visible" width="5.1" height="7.4"><text x="0" y="5.50" textLength="3.12" lengthAdjust="spacingAndGlyphs" font-family="Liberation Sans" font-size="5.5" font-weight="bold" fill="#303030" fill-opacity="1">P</text></svg>
<div class="key" style="left:518px;top:133px"></div>
<svg class="a" style="left:524.05px;top:136.50px;overflow:visible" width="6.9" height="9.5"><text x="0" y="7.00" textLength="4.90" lengthAdjust="spacingAndGlyphs" font-family="Liberation Sans" font-size="7" font-weight="bold" fill="#111" fill-opacity="1">Q</text></svg>
<svg class="a" style="left:524.68px;top:150.80px;overflow:visible" width="5.6" height="7.4"><text x="0" y="5.50" textLength="3.64" lengthAdjust="spacingAndGlyphs" font-family="Liberation Sans" font-size="5.5" font-weight="bold" fill="#500040" fill-opacity="1">Q</text></svg>
<div class="key" style="left:555px;top:133px"></div>
<svg class="a" style="left:561.23px;top:136.50px;overflow:visible" width="6.5" height="9.5"><text x="0" y="7.00" textLength="4.55" lengthAdjust="spacingAndGlyphs" font-family="Liberation Sans" font-size="7" font-weight="bold" fill="#111" fill-opacity="1">R</text></svg>
<svg class="a" style="left:561.81px;top:150.80px;overflow:visible" width="5.4" height="7.4"><text x="0" y="5.50" textLength="3.38" lengthAdjust="spacingAndGlyphs" font-family="Liberation Sans" font-size="5.5" font-weight="bold" fill="#500060" fill-opacity="1">R</text></svg>
<div class="key" style="left:255px;top:171px"></div>
<svg class="a" style="left:261.40px;top:174.50px;overflow:visible" width="6.2" height="9.5"><text x="0" y="7.00" textLength="4.20" lengthAdjust="spacingAndGlyphs" font-family="Liberation Sans" font-size="7" font-weight="bold" fill="#111" fill-opacity="1">S</text></svg>
<svg class="a" style="left:261.94px;top:188.80px;overflow:visible" width="5.1" height="7.4"><text x="0" y="5.50" textLength="3.12" lengthAdjust="spacingAndGlyphs" font-family="Liberation Sans" font-size="5.5" font-weight="bold" fill="#302050" fill-opacity="1">S</text></svg>
<div class="key" style="left:293px;top:171px"></div>
<svg class="a" style="left:299.58px;top:174.50px;overflow:visible" width="5.8" height="9.5"><text x="0" y="7.00" textLength="3.85" lengthAdjust="spacingAndGlyphs" font-family="Liberation Sans" font-size="7" font-weight="bold" fill="#111" fill-opacity="1">T</text></svg>
<svg class="a" style="left:300.07px;top:188.80px;overflow:visible" width="4.9" height="7.4"><text x="0" y="5.50" textLength="2.86" lengthAdjust="spacingAndGlyphs" font-family="Liberation Sans" font-size="5.5" font-weight="bold" fill="#102060" fill-opacity="1">T</text></svg>
<div class="key" style="left:330px;top:171px"></div>
<svg class="a" style="left:336.23px;top:174.50px;overflow:visible" width="6.5" height="9.5"><text x="0" y="7.00" textLength="4.55" lengthAdjust="spacingAndGlyphs" font-family="Liberation Sans" font-size="7" font-weight="bold" fill="#111" fill-opacity="1">U</text></svg>
<svg class="a" style="left:336.81px;top:188.80px;overflow:visible" width="5.4" height="7.4"><text x="0" y="5.50" textLength="3.38" lengthAdjust="spacingAndGlyphs" font-family="Liberation Sans" font-size="5.5" font-weight="bold" fill="#203050" fill-opacity="1">U</text></svg>
<div class="key" style="left:368px;top:171px"></div>
<svg class="a" style="left:374.40px;top:174.50px;overflow:visible" width="6.2" height="9.5"><text x="0" y="7.00" textLength="4.20" lengthAdjust="spacingAndGlyphs" font-family="Liberation Sans" font-size="7" font-weight="bold" fill="#111" fill-opacity="1">V</text></svg>
<svg class="a" style="left:374.94px;top:188.80px;overflow:visible" width="5.1" height="7.4"><text x="0" y="5.50" textLength="3.12" lengthAdjust="spacingAndGlyphs" font-family="Liberation Sans" font-size="5.5" font-weight="bold" fill="#500030" fill-opacity="1">V</text></svg>
<div class="key" style="left:406px;top:171px"></div>
<svg class="a" style="left:411.53px;top:174.50px;overflow:visible" width="7.9" height="9.5"><text x="0" y="7.00" textLength="5.95" lengthAdjust="spacingAndGlyphs" font-family="Liberation Sans" font-size="7" font-weight="bold" fill="#111" fill-opacity="1">W</text></svg>
<svg class="a" style="left:412.29px;top:188.80px;overflow:visible" width="6.4" height="7.4"><text x="0" y="5.50" textLength="4.41" lengthAdjust="spacingAndGlyphs" font-family="Liberation Sans" font-size="5.5" font-weight="bold" fill="#301050" fill-opacity="1">W</text></svg>
<div class="key" style="left:443px;top:171px"></div>
<svg class="a" style="left:449.40px;top:174.50px;overflow:visible" width="6.2" height="9.5"><text x="0" y="7.00" textLength="4.20" lengthAdjust="spacingAndGlyphs" font-family="Liberation Sans" font-size="7" font-weight="bold" fill="#111" fill-opacity="1">X</text></svg>
<svg class="a" style="left:449.94px;top:188.80px;overflow:visible" width="5.1" height="7.4"><text x="0" y="5.50" textLength="3.12" lengthAdjust="spacingAndGlyphs" font-family="Liberation Sans" font-size="5.5" font-weight="bold" fill="#101010" fill-opacity="1">X</text></svg>
<div class="key" style="left:481px;top:171px"></div>
<svg class="a" style="left:487.40px;top:174.50px;overflow:visible" width="6.2" height="9.5"><text x="0" y="7.00" textLength="4.20" lengthAdjust="spacingAndGlyphs" font-family="Liberation Sans" font-size="7" font-weight="bold" fill="#111" fill-opacity="1">Y</text></svg>
<svg class="a" style="left:487.94px;top:188.80px;overflow:visible" width="5.1" height="7.4"><text x="0" y="5.50" textLength="3.12" lengthAdjust="spacingAndGlyphs" font-family="Liberation Sans" font-size="5.5" font-weight="bold" fill="#303030" fill-opacity="1">Y</text></svg>
<div class="key" style="left:518px;top:171px"></div>
<svg class="a" style="left:524.58px;top:174.50px;overflow:visible" width="5.8" height="9.5"><text x="0" y="7.00" textLength="3.85" lengthAdjust="spacingAndGlyphs" font-family="Liberation Sans" font-size="7" font-weight="bold" fill="#111" fill-opacity="1">Z</text></svg>
<svg class="a" style="left:525.07px;top:188.80px;overflow:visible" width="4.9" height="7.4"><text x="0" y="5.50" textLength="2.86" lengthAdjust="spacingAndGlyphs" font-family="Liberation Sans" font-size="5.5" font-weight="bold" fill="#500040" fill-opacity="1">Z</text></svg>
<div class="kw" style="left:38px;top:55px;width:140px;height:414px"></div>
<div class="ttl" style="left:39px;top:56px;width:138px;height:15px"></div>
<div class="a" style="left:39px;top:71px;width:138px;height:1px;background:#56595c"></div>
<svg class="a" style="left:43.00px;top:61.50px;overflow:visible" width="29.0" height="8.1"><text x="0" y="6.00" textLength="27.00" lengthAdjust="spacingAndGlyphs" font-family="Liberation Sans" font-size="6" font-weight="normal" fill="#9894a8" fill-opacity="1">Key Images</text></svg>
<div class="cls" style="left:165px;top:61px"></div>
<svg class="a" style="left:165px;top:61px" width="8" height="8"><path d="M2.2 2.2L5.8 5.8M5.8 2.2L2.2 5.8" stroke="#fff" stroke-width="1.1"/></svg>
<div class="a" style="left:42px;top:72px;width:132px;height:393px;background:#fff;border-left:1px solid #6c6c6c"></div>
<svg class="a" style="left:52.70px;top:72.20px;overflow:visible" width="11.0" height="9.5"><text x="0" y="7.00" textLength="9.00" lengthAdjust="spacingAndGlyphs" font-family="Liberation Sans" font-size="7" font-weight="bold" fill="#000" fill-opacity="1">Up</text></svg>
<svg class="a" style="left:75.80px;top:72.20px;overflow:visible" width="19.5" height="9.5"><text x="0" y="7.00" textLength="17.50" lengthAdjust="spacingAndGlyphs" font-family="Liberation Sans" font-size="7" font-weight="bold" fill="#000" fill-opacity="1">Down</text></svg>
<svg class="a" style="left:103.75px;top:72.20px;overflow:visible" width="38.2" height="9.5"><text x="0" y="7.00" textLength="36.25" lengthAdjust="spacingAndGlyphs" font-family="Liberation Sans" font-size="7" font-weight="bold" fill="#000" fill-opacity="1">Description</text></svg>
<div class="a" style="left:165px;top:82px;width:8px;height:383px;background:#f0f0f0"></div>
<div class="a" style="left:165px;top:90px;width:8px;height:158px;background:#c8c8c8"></div>
<svg class="a" style="left:165px;top:83px" width="8" height="7"><path d="M2 4.5L4 2.5L6 4.5" stroke="#333" fill="none" stroke-width="1.1"/></svg>
<svg class="a" style="left:165px;top:457px" width="8" height="7"><path d="M2 2.5L4 4.5L6 2.5" stroke="#333" fill="none" stroke-width="1.1"/></svg>
<div class="img" style="left:44px;top:83px;width:23px;background:linear-gradient(#6c6c6c,#3c3c3c 40%,#3c3c3c 70%,#5c5c5c)"></div>
<div class="img" style="left:72px;top:83px;width:24px;background:linear-gradient(#5c5c5c,#3e3e3e 50%,#707070)"></div>
<svg class="a" style="left:101.50px;top:90.80px;overflow:visible" width="44.6" height="9.5"><text x="0" y="7.00" textLength="42.60" lengthAdjust="spacingAndGlyphs" font-family="Liberation Sans" font-size="7" font-weight="bold" fill="#111" fill-opacity="1">Android Gray</text></svg>
<div class="img" style="left:45px;top:107px;width:21.5px;background:linear-gradient(#f2f8f8,#d4ecec);border-radius:2px"></div>
<div class="img" style="left:74px;top:107px;width:21px;background:linear-gradient(#58bcae,#a8dcd4);border-radius:2px;border-top:1px solid #303030"></div>
<svg class="a" style="left:101.50px;top:114.80px;overflow:visible" width="18.8" height="9.5"><text x="0" y="7.00" textLength="16.80" lengthAdjust="spacingAndGlyphs" font-family="Liberation Sans" font-size="7" font-weight="bold" fill="#111" fill-opacity="1">Aqua</text></svg>
<div class="img" style="left:45px;top:131px;width:21.5px;background:#1e1e1e;border-radius:2px"></div>
<div class="img" style="left:74px;top:131px;width:21px;background:linear-gradient(#7a7a7a,#c0c0c0);border-radius:2px;border-top:1px solid #303030"></div>
<svg class="a" style="left:101.50px;top:138.80px;overflow:visible" width="20.0" height="9.5"><text x="0" y="7.00" textLength="18.00" lengthAdjust="spacingAndGlyphs" font-family="Liberation Sans" font-size="7" font-weight="bold" fill="#111" fill-opacity="1">Black</text></svg>
<div class="img" style="left:45px;top:155px;width:21.5px;background:linear-gradient(#3a3a3a,#222 50%,#161616);border-radius:2px"></div>
<div class="img" style="left:74px;top:155px;width:21px;background:linear-gradient(#787878,#bcbcbc);border-radius:2px;border-top:1px solid #303030"></div>
<svg class="a" style="left:101.50px;top:162.80px;overflow:visible" width="38.5" height="9.5"><text x="0" y="7.00" textLength="36.50" lengthAdjust="spacingAndGlyphs" font-family="Liberation Sans" font-size="7" font-weight="bold" fill="#111" fill-opacity="1">BlackGlass</text></svg>
<div class="img" style="left:45px;top:179px;width:21.5px;background:linear-gradient(#f4f6fa,#dfe6ee);border-radius:2px"></div>
<div class="img" style="left:74px;top:179px;width:21px;background:linear-gradient(#5a90c0,#a6c4e2);border-radius:2px;border-top:1px solid #303030"></div>
<svg class="a" style="left:101.50px;top:186.80px;overflow:visible" width="17.0" height="9.5"><text x="0" y="7.00" textLength="15.00" lengthAdjust="spacingAndGlyphs" font-family="Liberation Sans" font-size="7" font-weight="bold" fill="#111" fill-opacity="1">Blue</text></svg>
<div class="cir" style="left:44px;top:203px;background:linear-gradient(90deg,#30f4f4 15%,#e0ffff);border:1px solid #30f4f4"></div>
<div class="cir" style="left:73px;top:203px;background:linear-gradient(90deg,#e0ffff,#30f4f4 85%);border:1px solid #30f4f4"></div>
<svg class="a" style="left:101.50px;top:210.80px;overflow:visible" width="38.0" height="9.5"><text x="0" y="7.00" textLength="36.00" lengthAdjust="spacingAndGlyphs" font-family="Liberation Sans" font-size="7" font-weight="bold" fill="#111" fill-opacity="1">Circle Aqua</text></svg>
<div class="cir" style="left:44px;top:227px;background:linear-gradient(90deg,#3636f8 15%,#dcdcff);border:1px solid #3636f8"></div>
<div class="cir" style="left:73px;top:227px;background:linear-gradient(90deg,#dcdcff,#3636f8 85%);border:1px solid #3636f8"></div>
<svg class="a" style="left:101.50px;top:234.80px;overflow:visible" width="37.5" height="9.5"><text x="0" y="7.00" textLength="35.50" lengthAdjust="spacingAndGlyphs" font-family="Liberation Sans" font-size="7" font-weight="bold" fill="#111" fill-opacity="1">Circle Blue</text></svg>
<div class="cir" style="left:44px;top:251px;background:linear-gradient(90deg,#989898 15%,#e4e4e4);border:1px solid #989898"></div>
<div class="cir" style="left:73px;top:251px;background:linear-gradient(90deg,#e4e4e4,#989898 85%);border:1px solid #989898"></div>
<svg class="a" style="left:101.50px;top:258.80px;overflow:visible" width="37.5" height="9.5"><text x="0" y="7.00" textLength="35.50" lengthAdjust="spacingAndGlyphs" font-family="Liberation Sans" font-size="7" font-weight="bold" fill="#111" fill-opacity="1">Circle Gray</text></svg>
<div class="cir" style="left:44px;top:275px;background:linear-gradient(90deg,#38f098 15%,#d8f8e6);border:1px solid #38f098"></div>
<div class="cir" style="left:73px;top:275px;background:linear-gradient(90deg,#d8f8e6,#38f098 85%);border:1px solid #38f098"></div>
<svg class="a" style="left:101.50px;top:282.80px;overflow:visible" width="40.0" height="9.5"><text x="0" y="7.00" textLength="38.00" lengthAdjust="spacingAndGlyphs" font-family="Liberation Sans" font-size="7" font-weight="bold" fill="#111" fill-opacity="1">Circle Green</text></svg>
<div class="cir" style="left:44px;top:299px;background:linear-gradient(90deg,#ff3cff 15%,#f8d8f8);border:1px solid #ff3cff"></div>
<div class="cir" style="left:73px;top:299px;background:linear-gradient(90deg,#f8d8f8,#ff3cff 85%);border:1px solid #ff3cff"></div>
<svg class="a" style="left:101.50px;top:306.80px;overflow:visible" width="47.0" height="9.5"><text x="0" y="7.00" textLength="45.00" lengthAdjust="spacingAndGlyphs" font-family="Liberation Sans" font-size="7" font-weight="bold" fill="#111" fill-opacity="1">Circle Magenta</text></svg>
<div class="cir" style="left:44px;top:323px;background:linear-gradient(90deg,#ff8440 15%,#f8dcc8);border:1px solid #ff8440"></div>
<div class="cir" style="left:73px;top:323px;background:linear-gradient(90deg,#f8dcc8,#ff8440 85%);border:1px solid #ff8440"></div>
<svg class="a" style="left:101.50px;top:330.80px;overflow:visible" width="44.0" height="9.5"><text x="0" y="7.00" textLength="42.00" lengthAdjust="spacingAndGlyphs" font-family="Liberation Sans" font-size="7" font-weight="bold" fill="#111" fill-opacity="1">Circle Orange</text></svg>
<div class="cir" style="left:44px;top:347px;background:linear-gradient(90deg,#ff4488 15%,#f8d8e4);border:1px solid #ff4488"></div>
<div class="cir" style="left:73px;top:347px;background:linear-gradient(90deg,#f8d8e4,#ff4488 85%);border:1px solid #ff4488"></div>
<svg class="a" style="left:101.50px;top:354.80px;overflow:visible" width="34.0" height="9.5"><text x="0" y="7.00" textLength="32.00" lengthAdjust="spacingAndGlyphs" font-family="Liberation Sans" font-size="7" font-weight="bold" fill="#111" fill-opacity="1">Circle Pink</text></svg>
<div class="cir" style="left:44px;top:371px;background:linear-gradient(90deg,#9a44ff 15%,#e6d8fa);border:1px solid #9a44ff"></div>
<div class="cir" style="left:73px;top:371px;background:linear-gradient(90deg,#e6d8fa,#9a44ff 85%);border:1px solid #9a44ff"></div>
<svg class="a" style="left:101.50px;top:378.80px;overflow:visible" width="41.0" height="9.5"><text x="0" y="7.00" textLength="39.00" lengthAdjust="spacingAndGlyphs" font-family="Liberation Sans" font-size="7" font-weight="bold" fill="#111" fill-opacity="1">Circle Purple</text></svg>
<div class="cir" style="left:44px;top:395px;background:linear-gradient(90deg,#ff4444 15%,#f8dada);border:1px solid #ff4444"></div>
<div class="cir" style="left:73px;top:395px;background:linear-gradient(90deg,#f8dada,#ff4444 85%);border:1px solid #ff4444"></div>
<svg class="a" style="left:101.50px;top:402.80px;overflow:visible" width="34.0" height="9.5"><text x="0" y="7.00" textLength="32.00" lengthAdjust="spacingAndGlyphs" font-family="Liberation Sans" font-size="7" font-weight="bold" fill="#111" fill-opacity="1">Circle Red</text></svg>
<div class="cir" style="left:44px;top:419px;background:linear-gradient(90deg,#ffe222 15%,#f6f0c8);border:1px solid #ffe222"></div>
<div class="cir" style="left:73px;top:419px;background:linear-gradient(90deg,#f6f0c8,#ffe222 85%);border:1px solid #ffe222"></div>
<svg class="a" style="left:101.50px;top:426.80px;overflow:visible" width="42.0" height="9.5"><text x="0" y="7.00" textLength="40.00" lengthAdjust="spacingAndGlyphs" font-family="Liberation Sans" font-size="7" font-weight="bold" fill="#111" fill-opacity="1">Circle Yellow</text></svg>
<div class="img" style="left:45px;top:443px;width:21.5px;background:linear-gradient(#a8d8d2,#44ab9c);border-radius:2px"></div>
<div class="img" style="left:74px;top:443px;width:21px;background:linear-gradient(#d8ecec,#f2f8f8);border-top:1px solid #222"></div>
<svg class="a" style="left:101.50px;top:450.80px;overflow:visible" width="33.0" height="9.5"><text x="0" y="7.00" textLength="31.00" lengthAdjust="spacingAndGlyphs" font-family="Liberation Sans" font-size="7" font-weight="bold" fill="#111" fill-opacity="1">Dark Aqua</text></svg>
<div class="a" style="left:288px;top:283px;width:179px;height:180px;background:#f0f0f0;border:1px solid #a0a0a0;border-left-color:#3c8ad8;box-shadow:1px 1px 2px rgba(0,0,0,.35)"></div>
<div class="a" style="left:289px;top:284px;width:177px;height:15px;background:#fff"></div>
<svg class="a" style="left:293.00px;top:287.50px;overflow:visible" width="39.0" height="9.5"><text x="0" y="7.00" textLength="37.00" lengthAdjust="spacingAndGlyphs" font-family="Liberation Sans" font-size="7" font-weight="normal" fill="#2a1050" fill-opacity="1">Key Properties</text></svg>
<svg class="a" style="left:430.50px;top:287.50px;overflow:visible" width="6.0" height="9.5"><text x="0" y="7.00" textLength="4.00" lengthAdjust="spacingAndGlyphs" font-family="Liberation Sans" font-size="7" font-weight="normal" fill="#333" fill-opacity="1">?</text></svg>
<svg class="a" style="left:451px;top:288px" width="9" height="9"><path d="M1 1L8 8M8 1L1 8" stroke="#222" stroke-width="0.9"/></svg>
<div class="a" style="left:293px;top:312px;width:170px;height:131px;background:#f0f0f0;border:1px solid #b8b8b8"></div>
<div class="a" style="left:293px;top:303px;width:30px;height:10px;background:#f4f4f4;border:1px solid #c0c0c0;border-bottom:none"></div>
<svg class="a" style="left:295.75px;top:304.20px;overflow:visible" width="25.2" height="8.1"><text x="0" y="6.00" textLength="23.25" lengthAdjust="spacingAndGlyphs" font-family="Liberation Sans" font-size="6" font-weight="normal" fill="#101040" fill-opacity="1">Properties</text></svg>
<svg class="a" style="left:298.60px;top:321.60px;overflow:visible" width="24.0" height="8.1"><text x="0" y="6.00" textLength="22.00" lengthAdjust="spacingAndGlyphs" font-family="Liberation Sans" font-size="6" font-weight="bold" fill="#10103a" fill-opacity="1">Key Style</text></svg>
<svg class="a" style="left:322.60px;top:321.60px;overflow:visible" width="32.4" height="8.1"><text x="0" y="6.00" textLength="30.40" lengthAdjust="spacingAndGlyphs" font-family="Liberation Sans" font-size="6" font-weight="normal" fill="#404040" fill-opacity="1">. . . . . . . . . . . .</text></svg>
<div class="a" style="left:356px;top:320px;width:79px;height:10px;background:#fff;border:1px solid #a0a0a0"></div>
<div class="a" style="left:357px;top:321px;width:69px;height:8px;background:#0a62d2"></div>
<svg class="a" style="left:358.00px;top:321.40px;overflow:visible" width="26.0" height="8.1"><text x="0" y="6.00" textLength="24.00" lengthAdjust="spacingAndGlyphs" font-family="Liberation Sans" font-size="6" font-weight="normal" fill="#fff" fill-opacity="1">Embedded</text></svg>
<div class="a" style="left:426px;top:321px;width:8px;height:8px;background:#fff;border:1px solid #999"></div>
<svg class="a" style="left:426px;top:321px" width="8" height="8"><path d="M2 3H6L4 5.5Z" fill="#111"/></svg>
<svg class="a" style="left:298.60px;top:334.60px;overflow:visible" width="12.0" height="8.1"><text x="0" y="6.00" textLength="10.00" lengthAdjust="spacingAndGlyphs" font-family="Liberation Sans" font-size="6" font-weight="bold" fill="#10103a" fill-opacity="1">Units</text></svg>
<svg class="a" style="left:310.60px;top:334.60px;overflow:visible" width="44.4" height="8.1"><text x="0" y="6.00" textLength="42.40" lengthAdjust="spacingAndGlyphs" font-family="Liberation Sans" font-size="6" font-weight="normal" fill="#404040" fill-opacity="1">. . . . . . . . . . . .</text></svg>
<div class="a" style="left:356px;top:333px;width:79px;height:10px;background:#fff;border:1px solid #a0a0a0"></div>
<svg class="a" style="left:358.00px;top:334.40px;overflow:visible" width="16.7" height="8.1"><text x="0" y="6.00" textLength="14.72" lengthAdjust="spacingAndGlyphs" font-family="Liberation Sans" font-size="6" font-weight="normal" fill="#222" fill-opacity="1">Pixels</text></svg>
<div class="a" style="left:426px;top:334px;width:8px;height:8px;background:#fff;border:1px solid #999"></div>
<svg class="a" style="left:426px;top:334px" width="8" height="8"><path d="M2 3H6L4 5.5Z" fill="#111"/></svg>
<svg class="a" style="left:298.60px;top:347.60px;overflow:visible" width="22.0" height="8.1"><text x="0" y="6.00" textLength="20.00" lengthAdjust="spacingAndGlyphs" font-family="Liberation Sans" font-size="6" font-weight="bold" fill="#10103a" fill-opacity="1">Key Width</text></svg>
<svg class="a" style="left:320.60px;top:347.60px;overflow:visible" width="34.4" height="8.1"><text x="0" y="6.00" textLength="32.40" lengthAdjust="spacingAndGlyphs" font-family="Liberation Sans" font-size="6" font-weight="normal" fill="#404040" fill-opacity="1">. . . . . . . . . . . .</text></svg>
<div class="a" style="left:356px;top:346px;width:79px;height:10px;background:#fff;border:1px solid #a0a0a0"></div>
<svg class="a" style="left:358.00px;top:347.40px;overflow:visible" width="8.1" height="8.1"><text x="0" y="6.00" textLength="6.14" lengthAdjust="spacingAndGlyphs" font-family="Liberation Sans" font-size="6" font-weight="normal" fill="#222" fill-opacity="1">30</text></svg>
<svg class="a" style="left:298.60px;top:360.60px;overflow:visible" width="23.0" height="8.1"><text x="0" y="6.00" textLength="21.00" lengthAdjust="spacingAndGlyphs" font-family="Liberation Sans" font-size="6" font-weight="bold" fill="#10103a" fill-opacity="1">Key Height</text></svg>
<svg class="a" style="left:321.60px;top:360.60px;overflow:visible" width="33.4" height="8.1"><text x="0" y="6.00" textLength="31.40" lengthAdjust="spacingAndGlyphs" font-family="Liberation Sans" font-size="6" font-weight="normal" fill="#404040" fill-opacity="1">. . . . . . . . . . . .</text></svg>
<div class="a" style="left:356px;top:359px;width:79px;height:10px;background:#fff;border:1px solid #a0a0a0"></div>
<svg class="a" style="left:358.00px;top:360.40px;overflow:visible" width="8.1" height="8.1"><text x="0" y="6.00" textLength="6.14" lengthAdjust="spacingAndGlyphs" font-family="Liberation Sans" font-size="6" font-weight="normal" fill="#222" fill-opacity="1">30</text></svg>
<svg class="a" style="left:298.60px;top:373.60px;overflow:visible" width="21.0" height="8.1"><text x="0" y="6.00" textLength="19.00" lengthAdjust="spacingAndGlyphs" font-family="Liberation Sans" font-size="6" font-weight="bold" fill="#10103a" fill-opacity="1">Key Type</text></svg>
<svg class="a" style="left:319.60px;top:373.60px;overflow:visible" width="35.4" height="8.1"><text x="0" y="6.00" textLength="33.40" lengthAdjust="spacingAndGlyphs" font-family="Liberation Sans" font-size="6" font-weight="normal" fill="#404040" fill-opacity="1">. . . . . . . . . . . .</text></svg>
<div class="a" style="left:356px;top:372px;width:79px;height:10px;background:#fff;border:1px solid #a0a0a0"></div>
<svg class="a" style="left:358.00px;top:373.40px;overflow:visible" width="16.1" height="8.1"><text x="0" y="6.00" textLength="14.11" lengthAdjust="spacingAndGlyphs" font-family="Liberation Sans" font-size="6" font-weight="normal" fill="#222" fill-opacity="1">Press</text></svg>
<div class="a" style="left:426px;top:373px;width:8px;height:8px;background:#fff;border:1px solid #999"></div>
<svg class="a" style="left:426px;top:373px" width="8" height="8"><path d="M2 3H6L4 5.5Z" fill="#111"/></svg>
<svg class="a" style="left:298.60px;top:386.60px;overflow:visible" width="21.0" height="8.1"><text x="0" y="6.00" textLength="19.00" lengthAdjust="spacingAndGlyphs" font-family="Liberation Sans" font-size="6" font-weight="bold" fill="#10103a" fill-opacity="1">Key Label</text></svg>
<svg class="a" style="left:319.60px;top:386.60px;overflow:visible" width="35.4" height="8.1"><text x="0" y="6.00" textLength="33.40" lengthAdjust="spacingAndGlyphs" font-family="Liberation Sans" font-size="6" font-weight="normal" fill="#404040" fill-opacity="1">. . . . . . . . . . . .</text></svg>
<div class="a" style="left:356px;top:385px;width:79px;height:10px;background:#fff;border:1px solid #a0a0a0"></div>
<svg class="a" style="left:358.00px;top:386.40px;overflow:visible" width="26.2" height="8.1"><text x="0" y="6.00" textLength="24.25" lengthAdjust="spacingAndGlyphs" font-family="Liberation Sans" font-size="6" font-weight="normal" fill="#222" fill-opacity="1">{{VK::F9}}</text></svg>
<div class="a" style="left:437.5px;top:385px;width:9px;height:10px;background:#fafafa;border:1px solid #a0a0a0"></div>
<svg class="a" style="left:439.50px;top:386.80px;overflow:visible" width="7.0" height="8.1"><text x="0" y="6.00" textLength="5.00" lengthAdjust="spacingAndGlyphs" font-family="Liberation Sans" font-size="6" font-weight="bold" fill="#000" fill-opacity="1">...</text></svg>
<svg class="a" style="left:298.60px;top:399.60px;overflow:visible" width="35.0" height="8.1"><text x="0" y="6.00" textLength="33.00" lengthAdjust="spacingAndGlyphs" font-family="Liberation Sans" font-size="6" font-weight="bold" fill="#10103a" fill-opacity="1">Shifted Key Label</text></svg>
<svg class="a" style="left:333.60px;top:399.60px;overflow:visible" width="21.4" height="8.1"><text x="0" y="6.00" textLength="19.40" lengthAdjust="spacingAndGlyphs" font-family="Liberation Sans" font-size="6" font-weight="normal" fill="#404040" fill-opacity="1">. . . . . . . . . . . .</text></svg>
<div class="a" style="left:356px;top:398px;width:79px;height:10px;background:#fff;border:1px solid #a0a0a0"></div>
<svg class="a" style="left:358.00px;top:399.40px;overflow:visible" width="45.4" height="8.1"><text x="0" y="6.00" textLength="43.42" lengthAdjust="spacingAndGlyphs" font-family="Liberation Sans" font-size="6" font-weight="normal" fill="#222" fill-opacity="1">{{VK::SHIFT+F9}}</text></svg>
<div class="a" style="left:437.5px;top:398px;width:9px;height:10px;background:#fafafa;border:1px solid #a0a0a0"></div>
<svg class="a" style="left:439.50px;top:399.80px;overflow:visible" width="7.0" height="8.1"><text x="0" y="6.00" textLength="5.00" lengthAdjust="spacingAndGlyphs" font-family="Liberation Sans" font-size="6" font-weight="bold" fill="#000" fill-opacity="1">...</text></svg>
<svg class="a" style="left:298.60px;top:412.60px;overflow:visible" width="23.0" height="8.1"><text x="0" y="6.00" textLength="21.00" lengthAdjust="spacingAndGlyphs" font-family="Liberation Sans" font-size="6" font-weight="bold" fill="#10103a" fill-opacity="1">Key Action</text></svg>
<svg class="a" style="left:321.60px;top:412.60px;overflow:visible" width="33.4" height="8.1"><text x="0" y="6.00" textLength="31.40" lengthAdjust="spacingAndGlyphs" font-family="Liberation Sans" font-size="6" font-weight="normal" fill="#404040" fill-opacity="1">. . . . . . . . . . . .</text></svg>
<div class="a" style="left:356px;top:411px;width:79px;height:10px;background:#fff;border:1px solid #a0a0a0"></div>
<svg class="a" style="left:358.00px;top:412.40px;overflow:visible" width="29.9" height="8.1"><text x="0" y="6.00" textLength="27.92" lengthAdjust="spacingAndGlyphs" font-family="Liberation Sans" font-size="6" font-weight="normal" fill="#222" fill-opacity="1">{{KHF::F9}}</text></svg>
<div class="a" style="left:437.5px;top:411px;width:9px;height:10px;background:#fafafa;border:1px solid #a0a0a0"></div>
<svg class="a" style="left:439.50px;top:412.80px;overflow:visible" width="7.0" height="8.1"><text x="0" y="6.00" textLength="5.00" lengthAdjust="spacingAndGlyphs" font-family="Liberation Sans" font-size="6" font-weight="bold" fill="#000" fill-opacity="1">...</text></svg>
<svg class="a" style="left:298.60px;top:425.60px;overflow:visible" width="23.0" height="8.1"><text x="0" y="6.00" textLength="21.00" lengthAdjust="spacingAndGlyphs" font-family="Liberation Sans" font-size="6" font-weight="bold" fill="#10103a" fill-opacity="1">Face Color</text></svg>
<svg class="a" style="left:321.60px;top:425.60px;overflow:visible" width="33.4" height="8.1"><text x="0" y="6.00" textLength="31.40" lengthAdjust="spacingAndGlyphs" font-family="Liberation Sans" font-size="6" font-weight="normal" fill="#404040" fill-opacity="1">. . . . . . . . . . . .</text></svg>
<div class="a" style="left:356px;top:424px;width:79px;height:10px;background:#fff;border:1px solid #a0a0a0"></div>
<svg class="a" style="left:358.00px;top:425.40px;overflow:visible" width="27.5" height="8.1"><text x="0" y="6.00" textLength="25.46" lengthAdjust="spacingAndGlyphs" font-family="Liberation Sans" font-size="6" font-weight="normal" fill="#222" fill-opacity="1">Light Gray</text></svg>
<div class="a" style="left:426px;top:425px;width:8px;height:8px;background:#fff;border:1px solid #999"></div>
<svg class="a" style="left:426px;top:425px" width="8" height="8"><path d="M2 3H6L4 5.5Z" fill="#111"/></svg>
<div class="a" style="left:448px;top:319px;width:9px;height:115px;background:#fff;border:1px solid #c8c8c8"></div>
<div class="a" style="left:448px;top:319px;width:9px;height:9px;background:#f4f4f4;border:1px solid #909090"></div>
<div class="a" style="left:448px;top:328px;width:9px;height:10px;background:#f4f4f4;border:1px solid #909090"></div>
<div class="a" style="left:448px;top:425px;width:9px;height:9px;background:#f4f4f4;border:1px solid #909090"></div>
<svg class="a" style="left:448px;top:319px" width="9" height="9"><path d="M2.5 5.5H6.5L4.5 3Z" fill="#222"/></svg>
<svg class="a" style="left:448px;top:425px" width="9" height="9"><path d="M2.5 3.5H6.5L4.5 6Z" fill="#222"/></svg>
<div class="a" style="left:305px;top:448px;width:36px;height:10px;background:#e1e1e1;border:1px solid #adadad"></div>
<svg class="a" style="left:319.50px;top:449.60px;overflow:visible" width="9.0" height="8.1"><text x="0" y="6.00" textLength="7.00" lengthAdjust="spacingAndGlyphs" font-family="Liberation Sans" font-size="6" font-weight="normal" fill="#000" fill-opacity="1">OK</text></svg>
<div class="a" style="left:346px;top:448px;width:36px;height:10px;background:#e1e1e1;border:1px solid #adadad"></div>
<svg class="a" style="left:356.00px;top:449.60px;overflow:visible" width="18.0" height="8.1"><text x="0" y="6.00" textLength="16.00" lengthAdjust="spacingAndGlyphs" font-family="Liberation Sans" font-size="6" font-weight="normal" fill="#000" fill-opacity="1">Cancel</text></svg>
<div class="a" style="left:386px;top:448px;width:36px;height:10px;background:#e1e1e1;border:1px solid #adadad"></div>
<svg class="a" style="left:398.00px;top:449.60px;overflow:visible" width="14.0" height="8.1"><text x="0" y="6.00" textLength="12.00" lengthAdjust="spacingAndGlyphs" font-family="Liberation Sans" font-size="6" font-weight="normal" fill="#b0b0b0" fill-opacity="1">Apply</text></svg>
<div class="a" style="left:427px;top:448px;width:36px;height:10px;background:#e1e1e1;border:1px solid #adadad"></div>
<svg class="a" style="left:440.00px;top:449.60px;overflow:visible" width="12.0" height="8.1"><text x="0" y="6.00" textLength="10.00" lengthAdjust="spacingAndGlyphs" font-family="Liberation Sans" font-size="6" font-weight="normal" fill="#000" fill-opacity="1">Help</text></svg>
<div class="kw" style="left:497px;top:308px;width:139px;height:170px"></div>
<div class="ttl" style="left:498px;top:309px;width:137px;height:15px"></div>
<svg class="a" style="left:502.00px;top:314.50px;overflow:visible" width="61.0" height="8.1"><text x="0" y="6.00" textLength="59.00" lengthAdjust="spacingAndGlyphs" font-family="Liberation Sans" font-size="6" font-weight="normal" fill="#9894a8" fill-opacity="1">Keyboard Layout Select</text></svg>
<div class="cls" style="left:624px;top:314px"></div>
<svg class="a" style="left:624px;top:314px" width="8" height="8"><path d="M2.2 2.2L5.8 5.8M5.8 2.2L2.2 5.8" stroke="#fff" stroke-width="1.1"/></svg>
<div class="a" style="left:501px;top:324.5px;width:131px;height:10px;background:#3a3a3a"></div>
<svg class="a" style="left:504.00px;top:325.30px;overflow:visible" width="99.7" height="9.5"><text x="0" y="7.00" textLength="97.70" lengthAdjust="spacingAndGlyphs" font-family="Liberation Sans" font-size="7" font-weight="bold" fill="#12dce6" fill-opacity="1">Select Layout to Add to Project</text></svg>
<svg class="a" style="left:612.70px;top:325.30px;overflow:visible" width="12.3" height="9.5"><text x="0" y="7.00" textLength="10.30" lengthAdjust="spacingAndGlyphs" font-family="Liberation Sans" font-size="7" font-weight="bold" fill="#20c020" fill-opacity="1">&lt;-&gt;</text></svg>
<div class="a" style="left:502px;top:334.5px;width:130px;height:142.5px;background:#fff"></div>
<svg class="a" style="left:504.40px;top:334.30px;overflow:visible" width="34.8" height="9.5"><text x="0" y="7.00" textLength="32.80" lengthAdjust="spacingAndGlyphs" font-family="Liberation Sans" font-size="7" font-weight="bold" fill="#000" fill-opacity="1">104 Arabic</text></svg>
<svg class="a" style="left:504.40px;top:342.25px;overflow:visible" width="50.6" height="9.5"><text x="0" y="7.00" textLength="48.60" lengthAdjust="spacingAndGlyphs" font-family="Liberation Sans" font-size="7" font-weight="bold" fill="#000" fill-opacity="1">104 Arabic (Alt.)</text></svg>
<svg class="a" style="left:504.40px;top:350.20px;overflow:visible" width="49.6" height="9.5"><text x="0" y="7.00" textLength="47.60" lengthAdjust="spacingAndGlyphs" font-family="Liberation Sans" font-size="7" font-weight="bold" fill="#000" fill-opacity="1">104 Belarusian</text></svg>
<svg class="a" style="left:504.40px;top:358.15px;overflow:visible" width="68.6" height="9.5"><text x="0" y="7.00" textLength="66.60" lengthAdjust="spacingAndGlyphs" font-family="Liberation Sans" font-size="7" font-weight="bold" fill="#000" fill-opacity="1">104 Belgium (comma)</text></svg>
<svg class="a" style="left:504.40px;top:366.10px;overflow:visible" width="55.6" height="9.5"><text x="0" y="7.00" textLength="53.60" lengthAdjust="spacingAndGlyphs" font-family="Liberation Sans" font-size="7" font-weight="bold" fill="#000" fill-opacity="1">104 Belgium (old)</text></svg>
<svg class="a" style="left:504.40px;top:374.05px;overflow:visible" width="65.9" height="9.5"><text x="0" y="7.00" textLength="63.90" lengthAdjust="spacingAndGlyphs" font-family="Liberation Sans" font-size="7" font-weight="bold" fill="#000" fill-opacity="1">104 Belgium (period)</text></svg>
<svg class="a" style="left:504.40px;top:382.00px;overflow:visible" width="35.9" height="9.5"><text x="0" y="7.00" textLength="33.90" lengthAdjust="spacingAndGlyphs" font-family="Liberation Sans" font-size="7" font-weight="bold" fill="#000" fill-opacity="1">104 British</text></svg>
<svg class="a" style="left:504.40px;top:389.95px;overflow:visible" width="82.5" height="9.5"><text x="0" y="7.00" textLength="80.50" lengthAdjust="spacingAndGlyphs" font-family="Liberation Sans" font-size="7" font-weight="bold" fill="#000" fill-opacity="1">104 British (1st Alternate)</text></svg>
<svg class="a" style="left:504.40px;top:397.90px;overflow:visible" width="84.0" height="9.5"><text x="0" y="7.00" textLength="82.00" lengthAdjust="spacingAndGlyphs" font-family="Liberation Sans" font-size="7" font-weight="bold" fill="#000" fill-opacity="1">104 British (2nd Alternate)</text></svg>
<svg class="a" style="left:504.40px;top:405.85px;overflow:visible" width="47.0" height="9.5"><text x="0" y="7.00" textLength="45.00" lengthAdjust="spacingAndGlyphs" font-family="Liberation Sans" font-size="7" font-weight="bold" fill="#000" fill-opacity="1">104 Bulgarian</text></svg>
<svg class="a" style="left:504.40px;top:413.80px;overflow:visible" width="62.0" height="9.5"><text x="0" y="7.00" textLength="60.00" lengthAdjust="spacingAndGlyphs" font-family="Liberation Sans" font-size="7" font-weight="bold" fill="#000" fill-opacity="1">104 Bulgarian (Latin)</text></svg>
<svg class="a" style="left:504.40px;top:421.75px;overflow:visible" width="84.5" height="9.5"><text x="0" y="7.00" textLength="82.50" lengthAdjust="spacingAndGlyphs" font-family="Liberation Sans" font-size="7" font-weight="bold" fill="#000" fill-opacity="1">104 Canadian Multilingual</text></svg>
<svg class="a" style="left:504.40px;top:429.70px;overflow:visible" width="100.5" height="9.5"><text x="0" y="7.00" textLength="98.50" lengthAdjust="spacingAndGlyphs" font-family="Liberation Sans" font-size="7" font-weight="bold" fill="#000" fill-opacity="1">104 Canadian Multilingual (old)</text></svg>
<svg class="a" style="left:504.40px;top:437.65px;overflow:visible" width="68.0" height="9.5"><text x="0" y="7.00" textLength="66.00" lengthAdjust="spacingAndGlyphs" font-family="Liberation Sans" font-size="7" font-weight="bold" fill="#000" fill-opacity="1">104 Chinese (Cangjie)</text></svg>
<svg class="a" style="left:504.40px;top:445.60px;overflow:visible" width="65.0" height="9.5"><text x="0" y="7.00" textLength="63.00" lengthAdjust="spacingAndGlyphs" font-family="Liberation Sans" font-size="7" font-weight="bold" fill="#000" fill-opacity="1">104 Chinese (Zhuyin)</text></svg>
<svg class="a" style="left:504.40px;top:453.55px;overflow:visible" width="82.0" height="9.5"><text x="0" y="7.00" textLength="80.00" lengthAdjust="spacingAndGlyphs" font-family="Liberation Sans" font-size="7" font-weight="bold" fill="#000" fill-opacity="1">104 Chinese (Zhuyin) (Alt.)</text></svg>
<svg class="a" style="left:504.40px;top:461.50px;overflow:visible" width="46.0" height="9.5"><text x="0" y="7.00" textLength="44.00" lengthAdjust="spacingAndGlyphs" font-family="Liberation Sans" font-size="7" font-weight="bold" fill="#000" fill-opacity="1">104 Croatian</text></svg>
<svg class="a" style="left:504.40px;top:469.45px;overflow:visible" width="36.0" height="9.5"><text x="0" y="7.00" textLength="34.00" lengthAdjust="spacingAndGlyphs" font-family="Liberation Sans" font-size="7" font-weight="bold" fill="#000" fill-opacity="1">104 Czech</text></svg>
<div class="a" style="left:624px;top:335.5px;width:8px;height:141.5px;background:#f0f0f0"></div>
<div class="a" style="left:624px;top:343px;width:8px;height:23px;background:#c8c8c8"></div>
<svg class="a" style="left:624px;top:336px" width="8" height="7"><path d="M2 4.5L4 2.5L6 4.5" stroke="#333" fill="none" stroke-width="1.1"/></svg>
<svg class="a" style="left:624px;top:469px" width="8" height="7"><path d="M2 2.5L4 4.5L6 2.5" stroke="#333" fill="none" stroke-width="1.1"/></svg>
<div class="a" style="left:4px;top:477px;width:632px;height:11px;background:#c8c8c8"></div>
<div class="a" style="left:68.5px;top:478px;width:1px;height:10px;background:#8c8c8c"></div>
<div class="a" style="left:280px;top:478px;width:1px;height:10px;background:#8c8c8c"></div>
<svg class="a" style="left:5.50px;top:479.30px;overflow:visible" width="48.3" height="8.1"><text x="0" y="6.00" textLength="46.30" lengthAdjust="spacingAndGlyphs" font-family="Liberation Sans" font-size="6" font-weight="bold" fill="#000" fill-opacity="1">[Cursor] X:328    Y:99</text></svg>
<svg class="a" style="left:71.00px;top:479.30px;overflow:visible" width="136.5" height="8.1"><text x="0" y="6.00" textLength="134.50" lengthAdjust="spacingAndGlyphs" font-family="Liberation Sans" font-size="6" font-weight="bold" fill="#000" fill-opacity="1">[Active] Left:0 Top:0 Right:0 Bottom:0 Width:0 Height:0</text></svg>
<svg class="a" style="left:282.60px;top:479.30px;overflow:visible" width="78.8" height="8.1"><text x="0" y="6.00" textLength="76.80" lengthAdjust="spacingAndGlyphs" font-family="Liberation Sans" font-size="6" font-weight="bold" fill="#000" fill-opacity="1">Device: 848x220    Pen: Down</text></svg>
<div class="a" style="left:0px;top:488px;width:640px;height:4px;background:linear-gradient(90deg,#02122a,#061a36 40%,#0a2244 70%,#0a1e3a)"></div>
<div class="a" style="left:0px;top:492px;width:640px;height:20px;background:#04070d"></div>
<div class="a" style="left:24px;top:492px;width:172px;height:20px;background:#363636"></div>
<svg class="a" style="left:7px;top:497px" width="11" height="11"><path d="M1 2.2L4.6 1.7V5.2H1ZM5.3 1.6L10 1V5.2H5.3ZM1 5.9H4.6V9.4L1 8.9ZM5.3 5.9H10V10.1L5.3 9.5Z" fill="#fff"/></svg>
<svg class="a" style="left:27px;top:496px" width="13" height="13"><circle cx="6.5" cy="6.5" r="4.6" stroke="#fff" stroke-width="1.3" fill="none"/></svg>
<svg class="a" style="left:44.50px;top:497.60px;overflow:visible" width="65.3" height="9.5"><text x="0" y="7.00" textLength="63.30" lengthAdjust="spacingAndGlyphs" font-family="Liberation Sans" font-size="7" font-weight="normal" fill="#9aa4b0" fill-opacity="1">Type here to search</text></svg>
<div class="a" style="left:185px;top:498px;width:2px;height:1px;background:#ccc"></div>
<div class="a" style="left:184px;top:504px;width:1px;height:1px;background:#bbb"></div>
<div class="a" style="left:186px;top:505px;width:1px;height:1px;background:#bbb"></div>
<div class="a" style="left:188px;top:504px;width:1px;height:1px;background:#bbb"></div>
<svg class="a" style="left:202px;top:499px" width="12" height="8"><path d="M1 6.5H5M6 6.5H10V1" stroke="#fff" stroke-width="1" fill="none"/></svg>
<svg class="a" style="left:228px;top:496px" width="11" height="12"><path d="M9.8 6.6H3.2C3.4 8.6 5 9.6 6.8 9.6C8 9.6 9 9.2 9.6 8.8V10.5C8.8 11 7.8 11.3 6.5 11.3C3.3 11.3 1.2 9.2 1.2 6.3C1.2 3.2 3.5 0.8 6.3 0.8C8.6 0.8 10 2.5 10 4.9ZM3.3 5.2H8C8 3.8 7.2 2.7 5.9 2.7C4.6 2.7 3.6 3.6 3.3 5.2Z" fill="#2b7fd8"/></svg>
<svg class="a" style="left:251px;top:497px" width="13" height="11"><rect x="0.5" y="1" width="5" height="2" fill="#e8b850"/><rect x="0.5" y="2.5" width="12" height="8" fill="#f4cf6a"/><rect x="3" y="6" width="7" height="3" fill="#3c8fd8"/></svg>
<div class="a" style="left:248px;top:510.5px;width:20px;height:1.5px;background:#7ab8f0"></div>
<svg class="a" style="left:275px;top:496px" width="11" height="12"><path d="M3.5 3V1.5H7.5V3" stroke="#fff" fill="none"/><rect x="0.5" y="3" width="10" height="8.5" fill="#fff"/><rect x="3" y="5" width="2.3" height="2.3" fill="#f25022"/><rect x="5.7" y="5" width="2.3" height="2.3" fill="#7fba00"/><rect x="3" y="7.7" width="2.3" height="2.3" fill="#00a4ef"/><rect x="5.7" y="7.7" width="2.3" height="2.3" fill="#ffb900"/></svg>
<svg class="a" style="left:300px;top:498px" width="13" height="10"><rect x="0.5" y="1" width="12" height="8.5" fill="#fff"/><path d="M0.5 1.5L6.5 6L12.5 1.5" stroke="#0a0a0c" stroke-width="1" fill="none"/></svg>
<div class="a" style="left:319.5px;top:492px;width:23px;height:20px;background:#383838"></div>
<svg class="a" style="left:324px;top:495px" width="14" height="13"><path d="M0.5 2.5h1.5v2h1.5v-1.5h1v1.5h1.5v-2h1.5v3.5h-7z" fill="#f0e020" stroke="#111" stroke-width="0.3"/><rect x="9.5" y="1" width="2" height="7" fill="#e8e070"/><circle cx="10.5" cy="2.5" r="0.7" fill="#111"/><circle cx="10.5" cy="4.5" r="0.7" fill="#111"/><rect x="3" y="5.5" width="1.5" height="1.5" fill="#f0e020"/><path d="M3.5 8.5h8.5v2.5h-8.5z" fill="#f0e020"/><rect x="5" y="9" width="1" height="1.5" fill="#222"/><rect x="8" y="9" width="1" height="1.5" fill="#222"/></svg>
<div class="a" style="left:319.5px;top:510.5px;width:23px;height:1.5px;background:#7ab8f0"></div>
<svg class="a" style="left:547px;top:499px" width="9" height="6"><path d="M1 5L4.5 1.5L8 5" stroke="#ddd" fill="none" stroke-width="1"/></svg>
<svg class="a" style="left:558px;top:497px" width="10" height="10"><path d="M1 3.5H3L5.5 1V9L3 6.5H1Z" stroke="#ddd" fill="none" stroke-width="0.9"/><path d="M7 3L9 7M9 3L7 7" stroke="#ddd" stroke-width="0.8"/></svg>
<svg class="a" style="left:570px;top:498px" width="11" height="9"><path d="M1 1H10M3 1V8M3 5L7 8H10" stroke="#ddd" fill="none" stroke-width="1"/></svg>
<svg class="a" style="left:587.00px;top:494.40px;overflow:visible" width="23.0" height="8.1"><text x="0" y="6.00" textLength="21.00" lengthAdjust="spacingAndGlyphs" font-family="Liberation Sans" font-size="6" font-weight="normal" fill="#e8e8e8" fill-opacity="1">3:16 PM</text></svg>
<svg class="a" style="left:585.00px;top:503.00px;overflow:visible" width="27.0" height="8.1"><text x="0" y="6.00" textLength="25.00" lengthAdjust="spacingAndGlyphs" font-family="Liberation Sans" font-size="6" font-weight="normal" fill="#e8e8e8" fill-opacity="1">1/22/2018</text></svg>
<svg class="a" style="left:618px;top:497px" width="14" height="13"><path d="M0.5 1.5H9.5V7.5H4L2 9.5V7.5H0.5Z" fill="#fff"/><rect x="2" y="3.5" width="5" height="1" fill="#333"/><circle cx="10" cy="9" r="3.4" fill="#2a2a2a" stroke="#aaa" stroke-width="0.6"/><rect x="9.5" y="7" width="1.2" height="4" fill="#fff"/></svg>
<div class="a" style="left:637px;top:492px;width:1px;height:20px;background:#6a6a6a"></div>
</body></html>
